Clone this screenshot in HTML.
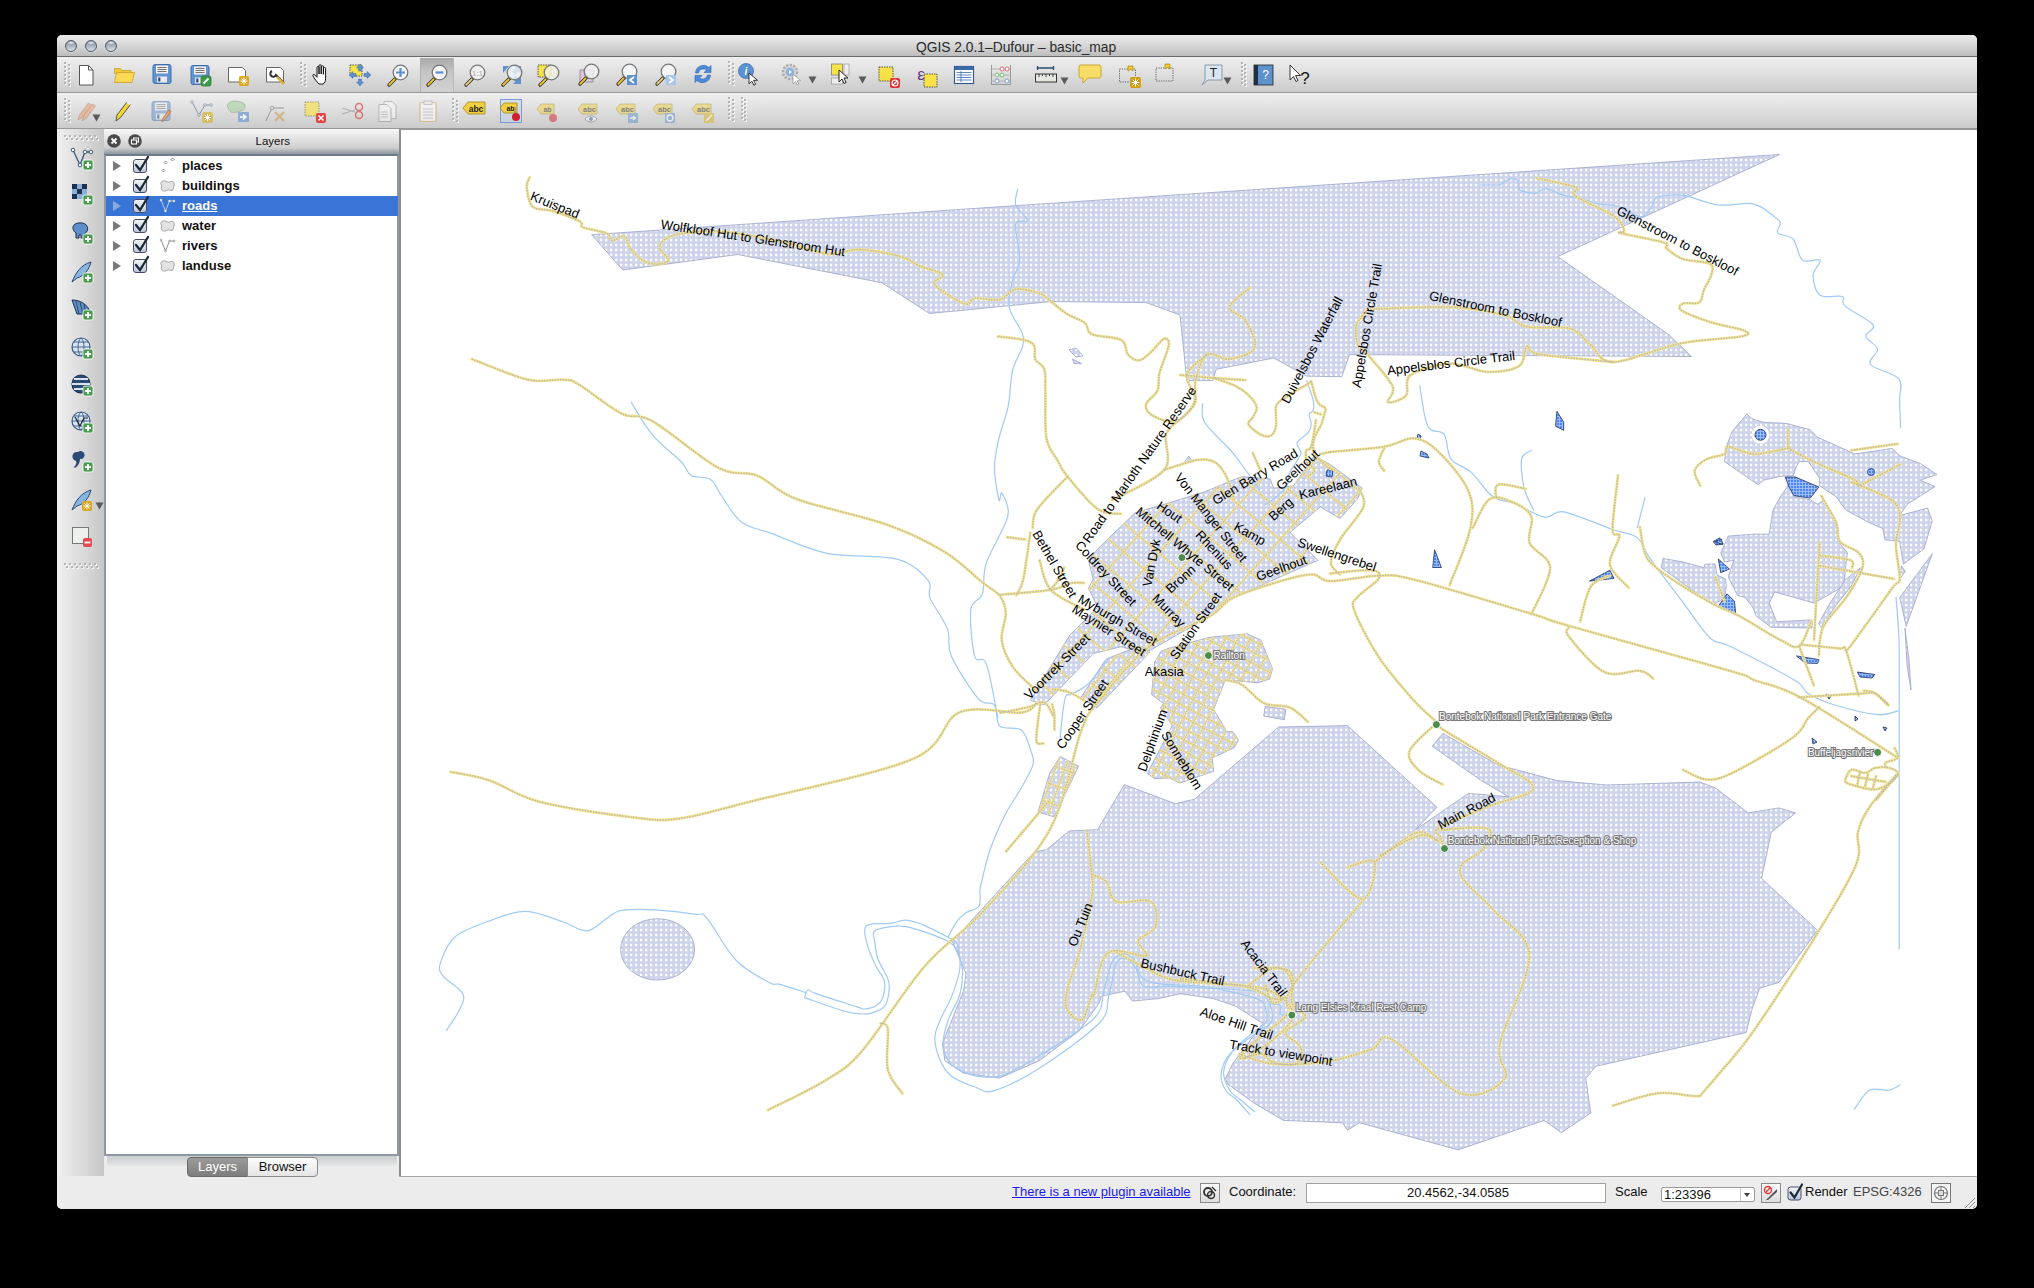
<!DOCTYPE html>
<html><head><meta charset="utf-8">
<style>
*{box-sizing:border-box;margin:0;padding:0}
svg text{font-family:"Liberation Sans",sans-serif}
html,body{width:2034px;height:1288px;overflow:hidden;background:#000;font-family:"Liberation Sans",sans-serif;position:relative}
#win{position:absolute;left:57px;top:35px;width:1920px;height:1174px;background:#ececec;border-radius:5px;overflow:hidden}
#title{position:absolute;left:0;top:0;width:1920px;height:22px;background:linear-gradient(#ececec,#d2d2d2 60%,#bdbdbd);border-bottom:1px solid #6a6a6a}
#title .t{position:absolute;left:859px;top:4.5px;font-size:13.8px;color:#2a2a2a}
.light{position:absolute;top:4.9px;width:12px;height:12px;border-radius:50%;background:radial-gradient(ellipse 40% 18% at 50% 18%,rgba(255,255,255,0.9),rgba(255,255,255,0) 100%),linear-gradient(#8f9dab 10%,#a4b0bc 45%,#d2dae2 90%);border:1.4px solid #4e5964;box-shadow:0 0.5px 0.5px rgba(255,255,255,0.7)}
.tb{position:absolute;left:0;width:1920px;height:36px;background:linear-gradient(#efefef,#dedede 50%,#cbcbcb);border-bottom:1px solid #989898}
#ltb{position:absolute;left:0;top:94px;width:47px;height:1047px;background:linear-gradient(90deg,#f0f0f0,#dadada 55%,#c6c6c6)}
#dock{position:absolute;left:47px;top:94px;width:296px;height:1047px;background:#ececec}
#dtitle{position:absolute;left:0;top:0;width:296px;height:25px;background:linear-gradient(#f8f8f8,#e2e2e2 40%,#cfcfcf 75%,#8c969f)}
#dtitle .t{position:absolute;left:151.5px;top:6px;font-size:11.5px;color:#111}
#tree{position:absolute;left:0;top:25px;width:295px;height:1002px;background:#fff;border:2px solid #8d98a3;border-top:2px solid #6f7b86}
#tabbar{position:absolute;left:1px;top:1027px;width:294px;height:20px;background:#ececec}
#tabbar .strip{position:absolute;left:2px;top:0;width:290px;height:10px;background:linear-gradient(#c8ccd0,#e6e6e6);border-radius:0 0 4px 4px}
#map{position:absolute;left:344px;top:95px;width:1576px;height:1046px;background:#fff;overflow:hidden}
#mapborder{position:absolute;left:342px;top:94px;width:2px;height:1047px;background:#8c8c8c}
#maptop{position:absolute;left:342px;top:94px;width:1578px;height:1px;background:#999}
#status{position:absolute;left:0;top:1141px;width:1920px;height:33px;background:#ececec}
#mapbot{position:absolute;left:342px;top:1141px;width:1578px;height:1px;background:#a8a8a8}
.ic{position:absolute;overflow:visible}
.hd{position:absolute;width:2px;height:2px;background:#b4b4b4;box-shadow:1px 1px 0 #fafafa}
.tri{position:absolute;width:0;height:0;border-left:8px solid #7a7a7a;border-top:5px solid transparent;border-bottom:5px solid transparent}
.lname{position:absolute;left:182px;font-size:13px;font-weight:bold;line-height:17px}
.st{position:absolute;font-size:13px;color:#111;line-height:16px}
.btn{position:absolute;background:linear-gradient(#fafafa,#dcdcdc);border:1px solid #8a8a8a}
</style></head><body>
<svg width="0" height="0" style="position:absolute"><defs><linearGradient id="cbg" x1="0" y1="0" x2="0" y2="1"><stop offset="0" stop-color="#f6f8fa"/><stop offset="1" stop-color="#b8c6d6"/></linearGradient></defs></svg>
<div id="win">
  <div id="title">
    <div class="light" style="left:7.9px"></div>
    <div class="light" style="left:27.8px"></div>
    <div class="light" style="left:47.9px"></div>
    <div class="t">QGIS 2.0.1–Dufour – basic_map</div>
  </div>
  <div class="tb" id="tb1" style="top:22px"></div>
  <div class="tb" id="tb2" style="top:58px"></div>
  <div id="ltb"></div>
  <div id="dock">
    <div id="dtitle"><div class="t">Layers</div></div>
    <div id="tree"></div>
    <div id="tabbar"><div class="strip"></div></div>
  </div>
  <div id="mapborder"></div>
  <div id="maptop"></div>
  <div id="map"><svg width="1576" height="1046" viewBox="401 130 1576 1046" style="position:absolute;left:0;top:0">
<defs><pattern id="dots" x="0" y="3" width="5" height="5" patternUnits="userSpaceOnUse"><rect width="5" height="5" fill="#ccd3ea"/><rect x="-0.5" y="0.5" width="3" height="3" fill="#e3e6f2"/><rect x="0" y="1" width="2" height="2" fill="#ffffff"/></pattern>
<pattern id="wdots" x="0" y="0" width="3" height="3" patternUnits="userSpaceOnUse"><rect width="3" height="3" fill="#9bbcf8"/><rect x="0" y="0" width="2" height="2" fill="#4d86f0"/></pattern></defs>
<polygon points="591.7,234.7 1000.0,206.7 1779.5,154.5 1557.7,256.6 1668.6,334.5 1691.5,356.5 1349.6,354.6 1341.7,376.8 1306.6,376.1 1273.8,358.0 1216.2,369.3 1212.8,380.6 1186.8,380.6 1180.0,315.0 1146.0,302.6 1051.0,301.5 990.0,307.6 929.5,313.5 882.0,282.8 737.8,254.5 622.7,270.0" fill="url(#dots)" stroke="#9aa3c8" stroke-width="0.8"/>
<polygon points="1124.3,784.6 1175.2,803.7 1194.4,799.3 1278.6,727.0 1347.4,725.6 1437.0,807.2 1415.4,829.8 1468.5,793.4 1508.8,796.8 1481.3,780.6 1432.1,746.2 1442.9,733.4 1498.0,764.9 1557.0,780.6 1606.2,785.0 1700.0,782.0 1715.4,787.9 1748.2,812.9 1779.0,807.9 1795.5,812.9 1771.3,832.2 1761.6,878.4 1817.5,930.4 1779.0,982.4 1759.7,988.2 1752.0,1009.3 1746.2,1032.5 1595.7,1066.3 1585.8,1078.6 1590.8,1113.0 1561.3,1132.6 1544.0,1120.4 1458.0,1149.9 1359.7,1122.8 1347.4,1130.2 1342.5,1122.8 1283.5,1120.4 1254.0,1103.1 1227.0,1083.5 1225.6,1078.1 1233.0,1063.2 1262.9,1023.5 1235.5,1006.0 1213.2,998.6 1180.9,993.7 1158.5,998.6 1132.4,1001.1 1125.0,991.2 1101.4,996.1 1098.9,1003.6 1079.0,1031.0 1039.3,1060.7 999.5,1078.1 963.5,1073.2 944.8,1060.7 942.4,1043.4 963.5,991.2 966.0,973.8 952.3,941.5 1034.3,852.0 1046.7,849.6 1069.0,831.0 1097.6,829.7" fill="url(#dots)" stroke="#9aa3c8" stroke-width="0.8"/>
<polygon points="1030.3,700.2 1044.3,704.9 1093.2,653.6 1121.1,646.7 1144.4,653.6 1209.7,616.4 1233.0,597.7 1312.2,562.8 1318.0,560.5 1290.0,532.5 1320.3,506.9 1340.1,518.5 1357.6,498.7 1362.3,488.2 1330.8,464.9 1314.5,455.6 1293.5,485.9 1273.7,488.2 1270.2,478.9 1242.3,476.6 1233.0,480.1 1205.0,491.7 1174.7,501.1 1135.1,512.7 1097.8,548.8 1088.5,560.5 1093.2,579.1 1088.5,588.4 1097.8,607.1 1069.9,635.0" fill="url(#dots)" stroke="#9aa3c8" stroke-width="0.8"/>
<polygon points="1097.0,707.9 1080.8,697.5 1105.9,659.2 1120.6,653.3 1140.0,646.0 1150.0,652.0" fill="url(#dots)" stroke="#9aa3c8" stroke-width="0.8"/>
<polygon points="1161.2,651.1 1169.3,648.1 1209.7,637.3 1247.0,633.8 1260.8,640.0 1272.6,668.8 1269.6,679.1 1257.8,682.8 1225.4,679.8 1213.6,709.3 1226.8,731.5 1232.7,731.5 1238.6,740.3 1234.2,747.7 1212.1,758.0 1213.6,771.3 1179.6,783.1 1169.3,777.9 1154.6,778.7 1147.2,773.5 1172.3,725.6 1160.5,707.9 1163.4,703.4 1151.6,694.6 1154.6,662.1" fill="url(#dots)" stroke="#9aa3c8" stroke-width="0.8"/>
<polygon points="1060.2,756.5 1078.6,766.1 1054.3,817.0 1038.0,811.9 1049.8,772.8" fill="url(#dots)" stroke="#9aa3c8" stroke-width="0.8"/>
<polygon points="1265.2,706.4 1285.8,709.3 1284.4,719.7 1263.7,716.0" fill="url(#dots)" stroke="#9aa3c8" stroke-width="0.8"/>
<polygon points="1746.9,414.0 1751.5,418.6 1763.7,422.4 1786.0,423.3 1810.2,429.8 1817.7,437.3 1855.0,454.0 1892.2,448.4 1899.7,455.9 1920.2,463.4 1937.0,474.5 1920.2,480.1 1935.1,486.6 1907.1,504.3 1899.7,515.5 1927.6,508.1 1932.3,521.1 1923.9,549.0 1903.4,564.0 1899.7,541.6 1884.8,539.7 1882.9,528.6 1869.9,523.0 1845.6,509.9 1836.3,496.9 1819.6,485.7 1819.6,478.3 1808.4,461.5 1799.0,461.5 1795.3,468.9 1793.5,475.5 1780.4,476.4 1763.7,480.1 1758.1,484.8 1724.5,461.5 1726.4,446.6 1732.0,431.7" fill="url(#dots)" stroke="#9aa3c8" stroke-width="0.8"/>
<polygon points="1780.4,496.9 1791.6,480.1 1793.5,496.9 1810.2,499.7 1817.7,504.3 1823.3,500.6 1832.6,513.7 1836.3,526.7 1838.2,541.6 1847.5,552.8 1846.6,558.4 1843.8,586.3 1814.0,603.1 1774.8,591.9 1769.2,603.1 1776.7,621.7 1812.1,619.9 1812.0,628.0 1771.1,627.3 1756.2,616.1 1752.5,606.8 1745.0,597.5 1737.6,595.6 1728.3,577.0 1733.8,560.2 1724.5,562.1 1720.8,552.8 1728.3,536.0 1754.3,534.2 1769.2,534.2 1773.0,510.0" fill="url(#dots)" stroke="#9aa3c8" stroke-width="0.8"/>
<polygon points="1663.0,558.4 1683.5,562.1 1704.0,567.7 1705.0,564.0 1715.2,564.0 1717.1,575.1 1725.5,578.9 1726.4,586.3 1724.5,597.5 1713.4,605.0 1702.2,597.5 1661.2,567.7" fill="url(#dots)" stroke="#9aa3c8" stroke-width="0.8"/>
<polygon points="1932.3,553.7 1899.7,597.5 1906.2,626.4" fill="url(#dots)" stroke="#9aa3c8" stroke-width="0.8"/>
<polygon points="1905.0,628.0 1909.0,660.0 1911.0,690.0 1907.0,665.0" fill="url(#dots)" stroke="#9aa3c8" stroke-width="0.8"/>
<polygon points="1901.5,565.8 1905.3,571.4 1899.7,578.9" fill="url(#dots)" stroke="#9aa3c8" stroke-width="0.8"/>
<polygon points="1860.5,567.7 1851.2,586.3 1836.3,605.0 1821.4,627.3 1818.6,623.6 1828.9,605.0 1845.0,580.0" fill="url(#dots)" stroke="#9aa3c8" stroke-width="0.8"/>
<polygon points="1069.0,350.0 1076.0,348.0 1083.0,356.0 1076.0,357.0" fill="url(#dots)" stroke="#9aa3c8" stroke-width="0.8"/>
<polygon points="1072.5,359.0 1081.6,363.7 1074.0,363.7" fill="url(#dots)" stroke="#9aa3c8" stroke-width="0.8"/>
<polygon points="1188.7,456.0 1193.0,462.0 1184.0,463.0" fill="url(#dots)" stroke="#9aa3c8" stroke-width="0.8"/>
<ellipse cx="657.6" cy="949.4" rx="37" ry="30.7" fill="url(#dots)" stroke="#9aa3c8" stroke-width="0.8"/>
<polygon points="1785.3,477.0 1795.3,477.0 1818.9,487.0 1810.2,498.1 1794.0,495.7 1789.0,487.0" fill="url(#wdots)" stroke="#1e2e60" stroke-width="0.8"/>
<polygon points="1713.3,541.6 1719.5,537.9 1723.2,544.1 1716.0,545.0" fill="url(#wdots)" stroke="#1e2e60" stroke-width="0.8"/>
<polygon points="1718.3,559.0 1729.4,569.0 1720.7,572.7" fill="url(#wdots)" stroke="#1e2e60" stroke-width="0.8"/>
<polygon points="1727.0,593.8 1734.4,601.2 1735.7,613.7 1718.3,606.2" fill="url(#wdots)" stroke="#1e2e60" stroke-width="0.8"/>
<polygon points="1796.5,655.9 1818.9,659.6 1817.6,663.4 1805.0,663.0" fill="url(#wdots)" stroke="#1e2e60" stroke-width="0.8"/>
<polygon points="1857.4,672.0 1874.8,674.5 1872.0,678.0 1860.0,677.0" fill="url(#wdots)" stroke="#1e2e60" stroke-width="0.8"/>
<polygon points="1556.9,411.3 1563.7,422.1 1563.7,430.3 1555.5,426.2" fill="url(#wdots)" stroke="#1e2e60" stroke-width="0.8"/>
<polygon points="1434.6,549.8 1441.4,567.5 1432.7,567.5" fill="url(#wdots)" stroke="#1e2e60" stroke-width="0.8"/>
<polygon points="1589.5,581.1 1609.9,570.2 1614.0,578.4" fill="url(#wdots)" stroke="#1e2e60" stroke-width="0.8"/>
<polygon points="1714.5,541.7 1721.3,539.0 1722.7,544.4" fill="url(#wdots)" stroke="#1e2e60" stroke-width="0.8"/>
<polygon points="1418.0,434.0 1421.0,436.0 1420.0,440.0 1417.0,439.0" fill="url(#wdots)" stroke="#1e2e60" stroke-width="0.8"/>
<polygon points="1421.0,451.0 1427.0,454.0 1429.0,458.0 1420.0,456.0" fill="url(#wdots)" stroke="#1e2e60" stroke-width="0.8"/>
<polygon points="1826.0,694.0 1831.0,696.0 1829.0,699.0" fill="url(#wdots)" stroke="#1e2e60" stroke-width="0.8"/>
<polygon points="1855.0,716.0 1858.0,719.0 1855.0,721.0" fill="url(#wdots)" stroke="#1e2e60" stroke-width="0.8"/>
<polygon points="1883.0,727.0 1887.0,728.0 1885.0,731.0" fill="url(#wdots)" stroke="#1e2e60" stroke-width="0.8"/>
<polygon points="1812.0,738.0 1817.0,742.0 1813.0,744.0" fill="url(#wdots)" stroke="#1e2e60" stroke-width="0.8"/>
<polygon points="1327.0,470.0 1333.0,470.0 1332.0,477.0 1326.0,476.0" fill="url(#wdots)" stroke="#1e2e60" stroke-width="0.8"/>
<circle cx="1760.5" cy="434.8" r="9" fill="#fff"/><circle cx="1760.5" cy="434.8" r="5.5" fill="url(#wdots)" stroke="#1e2e60" stroke-width="0.8"/>
<circle cx="1871" cy="472" r="3.5" fill="url(#wdots)" stroke="#1e2e60" stroke-width="0.7"/>
<clipPath id="cp1"><polygon points="1030.3,700.2 1044.3,704.9 1093.2,653.6 1121.1,646.7 1144.4,653.6 1209.7,616.4 1233.0,597.7 1312.2,562.8 1318.0,560.5 1290.0,532.5 1320.3,506.9 1340.1,518.5 1357.6,498.7 1362.3,488.2 1330.8,464.9 1314.5,455.6 1293.5,485.9 1273.7,488.2 1270.2,478.9 1242.3,476.6 1233.0,480.1 1205.0,491.7 1174.7,501.1 1135.1,512.7 1097.8,548.8 1088.5,560.5 1093.2,579.1 1088.5,588.4 1097.8,607.1 1069.9,635.0"/></clipPath>
<g clip-path="url(#cp1)"><path d="M1166.3 99.5L1675.0 526.3 M1152.2 116.3L1660.8 543.2 M1138.0 133.2L1646.7 560.0 M1123.9 150.1L1632.5 576.9 M1109.7 166.9L1618.4 593.7 M1095.6 183.8L1604.3 610.6 M1081.5 200.6L1590.1 627.4 M1067.3 217.5L1576.0 644.3 M1053.2 234.3L1561.8 661.1 M1039.0 251.2L1547.7 678.0 M1024.9 268.0L1533.5 694.8 M1010.8 284.9L1519.4 711.7 M996.6 301.7L1505.3 728.5 M982.5 318.6L1491.1 745.4 M968.3 335.4L1477.0 762.2 M954.2 352.3L1462.8 779.1 M940.0 369.1L1448.7 796.0 M925.9 386.0L1434.6 812.8 M911.8 402.8L1420.4 829.7 M897.6 419.7L1406.3 846.5 M883.5 436.6L1392.1 863.4 M869.3 453.4L1378.0 880.2 M855.2 470.3L1363.9 897.1 M841.1 487.1L1349.7 913.9 M826.9 504.0L1335.6 930.8 M812.8 520.8L1321.4 947.6 M798.6 537.7L1307.3 964.5 M784.5 554.5L1293.1 981.3 M770.3 571.4L1279.0 998.2 M756.2 588.2L1264.9 1015.0 M742.1 605.1L1250.7 1031.9 M727.9 621.9L1236.6 1048.7 M719.2 597.5L1163.6 104.0 M739.3 615.5L1183.6 122.1 M759.4 633.6L1203.7 140.1 M779.4 651.7L1223.7 158.2 M799.5 669.7L1243.8 176.3 M819.6 687.8L1263.9 194.3 M839.6 705.9L1283.9 212.4 M859.7 723.9L1304.0 230.5 M879.8 742.0L1324.1 248.5 M899.8 760.1L1344.1 266.6 M919.9 778.1L1364.2 284.7 M940.0 796.2L1384.3 302.7 M960.0 814.3L1404.3 320.8 M980.1 832.3L1424.4 338.9 M1000.2 850.4L1444.5 356.9 M1020.2 868.5L1464.5 375.0 M1040.3 886.5L1484.6 393.1 M1060.4 904.6L1504.7 411.1 M1080.4 922.7L1524.7 429.2 M1100.5 940.7L1544.8 447.3 M1120.5 958.8L1564.9 465.3 M1140.6 976.9L1584.9 483.4 M1160.7 994.9L1605.0 501.5 M1180.7 1013.0L1625.0 519.5 M1200.8 1031.1L1645.1 537.6 M1220.9 1049.1L1665.2 555.7" fill="none" stroke="#f4e290" stroke-width="2.4"/><path d="M1166.3 99.5L1675.0 526.3 M1152.2 116.3L1660.8 543.2 M1138.0 133.2L1646.7 560.0 M1123.9 150.1L1632.5 576.9 M1109.7 166.9L1618.4 593.7 M1095.6 183.8L1604.3 610.6 M1081.5 200.6L1590.1 627.4 M1067.3 217.5L1576.0 644.3 M1053.2 234.3L1561.8 661.1 M1039.0 251.2L1547.7 678.0 M1024.9 268.0L1533.5 694.8 M1010.8 284.9L1519.4 711.7 M996.6 301.7L1505.3 728.5 M982.5 318.6L1491.1 745.4 M968.3 335.4L1477.0 762.2 M954.2 352.3L1462.8 779.1 M940.0 369.1L1448.7 796.0 M925.9 386.0L1434.6 812.8 M911.8 402.8L1420.4 829.7 M897.6 419.7L1406.3 846.5 M883.5 436.6L1392.1 863.4 M869.3 453.4L1378.0 880.2 M855.2 470.3L1363.9 897.1 M841.1 487.1L1349.7 913.9 M826.9 504.0L1335.6 930.8 M812.8 520.8L1321.4 947.6 M798.6 537.7L1307.3 964.5 M784.5 554.5L1293.1 981.3 M770.3 571.4L1279.0 998.2 M756.2 588.2L1264.9 1015.0 M742.1 605.1L1250.7 1031.9 M727.9 621.9L1236.6 1048.7 M719.2 597.5L1163.6 104.0 M739.3 615.5L1183.6 122.1 M759.4 633.6L1203.7 140.1 M779.4 651.7L1223.7 158.2 M799.5 669.7L1243.8 176.3 M819.6 687.8L1263.9 194.3 M839.6 705.9L1283.9 212.4 M859.7 723.9L1304.0 230.5 M879.8 742.0L1324.1 248.5 M899.8 760.1L1344.1 266.6 M919.9 778.1L1364.2 284.7 M940.0 796.2L1384.3 302.7 M960.0 814.3L1404.3 320.8 M980.1 832.3L1424.4 338.9 M1000.2 850.4L1444.5 356.9 M1020.2 868.5L1464.5 375.0 M1040.3 886.5L1484.6 393.1 M1060.4 904.6L1504.7 411.1 M1080.4 922.7L1524.7 429.2 M1100.5 940.7L1544.8 447.3 M1120.5 958.8L1564.9 465.3 M1140.6 976.9L1584.9 483.4 M1160.7 994.9L1605.0 501.5 M1180.7 1013.0L1625.0 519.5 M1200.8 1031.1L1645.1 537.6 M1220.9 1049.1L1665.2 555.7" fill="none" stroke="#c4c0b0" stroke-width="1.2" stroke-dasharray="1.4 1.2"/></g>
<clipPath id="cp2"><polygon points="1097.0,707.9 1080.8,697.5 1105.9,659.2 1120.6,653.3 1140.0,646.0 1150.0,652.0"/></clipPath>
<g clip-path="url(#cp2)"><path d="M1016.1 687.2L1101.3 578.1 M1025.5 694.5L1110.7 585.5 M1035.0 701.9L1120.2 592.9 M1044.4 709.3L1129.6 600.3 M1053.9 716.7L1139.1 607.6 M1063.3 724.1L1148.5 615.0 M1072.8 731.5L1158.0 622.4 M1082.3 738.9L1167.5 629.8 M1091.7 746.3L1176.9 637.2 M1101.2 753.6L1186.4 644.6 M1110.6 761.0L1195.8 652.0 M1120.1 768.4L1205.3 659.4 M1110.1 571.3L1219.2 656.5 M1097.8 587.1L1206.9 672.3 M1085.5 602.8L1194.6 688.0 M1073.2 618.6L1182.2 703.8 M1060.9 634.3L1169.9 719.6 M1048.6 650.1L1157.6 735.3 M1036.2 665.9L1145.3 751.1 M1023.9 681.6L1133.0 766.8" fill="none" stroke="#f4e290" stroke-width="2.4"/><path d="M1016.1 687.2L1101.3 578.1 M1025.5 694.5L1110.7 585.5 M1035.0 701.9L1120.2 592.9 M1044.4 709.3L1129.6 600.3 M1053.9 716.7L1139.1 607.6 M1063.3 724.1L1148.5 615.0 M1072.8 731.5L1158.0 622.4 M1082.3 738.9L1167.5 629.8 M1091.7 746.3L1176.9 637.2 M1101.2 753.6L1186.4 644.6 M1110.6 761.0L1195.8 652.0 M1120.1 768.4L1205.3 659.4 M1110.1 571.3L1219.2 656.5 M1097.8 587.1L1206.9 672.3 M1085.5 602.8L1194.6 688.0 M1073.2 618.6L1182.2 703.8 M1060.9 634.3L1169.9 719.6 M1048.6 650.1L1157.6 735.3 M1036.2 665.9L1145.3 751.1 M1023.9 681.6L1133.0 766.8" fill="none" stroke="#c4c0b0" stroke-width="1.2" stroke-dasharray="1.4 1.2"/></g>
<clipPath id="cp3"><polygon points="1161.2,651.1 1169.3,648.1 1209.7,637.3 1247.0,633.8 1260.8,640.0 1272.6,668.8 1269.6,679.1 1257.8,682.8 1225.4,679.8 1213.6,709.3 1226.8,731.5 1232.7,731.5 1238.6,740.3 1234.2,747.7 1212.1,758.0 1213.6,771.3 1179.6,783.1 1169.3,777.9 1154.6,778.7 1147.2,773.5 1172.3,725.6 1160.5,707.9 1163.4,703.4 1151.6,694.6 1154.6,662.1"/></clipPath>
<g clip-path="url(#cp3)"><path d="M1148.5 505.9L1412.1 646.1 M1143.8 514.7L1407.5 654.9 M1139.1 523.6L1402.8 663.8 M1134.4 532.4L1398.1 672.6 M1129.7 541.2L1393.4 681.4 M1125.0 550.1L1388.7 690.2 M1120.3 558.9L1384.0 699.1 M1115.6 567.7L1379.3 707.9 M1110.9 576.6L1374.6 716.7 M1106.2 585.4L1369.9 725.6 M1101.5 594.2L1365.2 734.4 M1096.9 603.0L1360.5 743.2 M1092.2 611.9L1355.8 752.1 M1087.5 620.7L1351.1 760.9 M1082.8 629.5L1346.4 769.7 M1078.1 638.4L1341.7 778.5 M1073.4 647.2L1337.0 787.4 M1068.7 656.0L1332.3 796.2 M1064.0 664.8L1327.6 805.0 M1059.3 673.7L1322.9 813.9 M1054.6 682.5L1318.3 822.7 M1049.9 691.3L1313.6 831.5 M1045.2 700.2L1308.9 840.3 M1040.5 709.0L1304.2 849.2 M1035.8 717.8L1299.5 858.0 M1031.1 726.7L1294.8 866.8 M1026.4 735.5L1290.1 875.7 M1021.7 744.3L1285.4 884.5 M1017.0 753.1L1280.7 893.3 M1012.3 762.0L1276.0 902.2 M1006.5 769.4L1146.7 505.7 M1016.2 774.5L1156.4 510.9 M1025.9 779.7L1166.1 516.1 M1035.6 784.9L1175.8 521.2 M1045.3 790.0L1185.5 526.4 M1055.0 795.2L1195.2 531.6 M1064.8 800.4L1204.9 536.7 M1074.5 805.5L1214.7 541.9 M1084.2 810.7L1224.4 547.0 M1093.9 815.9L1234.1 552.2 M1103.6 821.0L1243.8 557.4 M1113.3 826.2L1253.5 562.5 M1123.0 831.4L1263.2 567.7 M1132.7 836.5L1272.9 572.9 M1142.5 841.7L1282.6 578.0 M1152.2 846.8L1292.4 583.2 M1161.9 852.0L1302.1 588.4 M1171.6 857.2L1311.8 593.5 M1181.3 862.3L1321.5 598.7 M1191.0 867.5L1331.2 603.9 M1200.7 872.7L1340.9 609.0 M1210.4 877.8L1350.6 614.2 M1220.2 883.0L1360.3 619.3 M1229.9 888.2L1370.1 624.5 M1239.6 893.3L1379.8 629.7 M1249.3 898.5L1389.5 634.8 M1259.0 903.7L1399.2 640.0 M1268.7 908.8L1408.9 645.2" fill="none" stroke="#f4e290" stroke-width="2.4"/><path d="M1148.5 505.9L1412.1 646.1 M1143.8 514.7L1407.5 654.9 M1139.1 523.6L1402.8 663.8 M1134.4 532.4L1398.1 672.6 M1129.7 541.2L1393.4 681.4 M1125.0 550.1L1388.7 690.2 M1120.3 558.9L1384.0 699.1 M1115.6 567.7L1379.3 707.9 M1110.9 576.6L1374.6 716.7 M1106.2 585.4L1369.9 725.6 M1101.5 594.2L1365.2 734.4 M1096.9 603.0L1360.5 743.2 M1092.2 611.9L1355.8 752.1 M1087.5 620.7L1351.1 760.9 M1082.8 629.5L1346.4 769.7 M1078.1 638.4L1341.7 778.5 M1073.4 647.2L1337.0 787.4 M1068.7 656.0L1332.3 796.2 M1064.0 664.8L1327.6 805.0 M1059.3 673.7L1322.9 813.9 M1054.6 682.5L1318.3 822.7 M1049.9 691.3L1313.6 831.5 M1045.2 700.2L1308.9 840.3 M1040.5 709.0L1304.2 849.2 M1035.8 717.8L1299.5 858.0 M1031.1 726.7L1294.8 866.8 M1026.4 735.5L1290.1 875.7 M1021.7 744.3L1285.4 884.5 M1017.0 753.1L1280.7 893.3 M1012.3 762.0L1276.0 902.2 M1006.5 769.4L1146.7 505.7 M1016.2 774.5L1156.4 510.9 M1025.9 779.7L1166.1 516.1 M1035.6 784.9L1175.8 521.2 M1045.3 790.0L1185.5 526.4 M1055.0 795.2L1195.2 531.6 M1064.8 800.4L1204.9 536.7 M1074.5 805.5L1214.7 541.9 M1084.2 810.7L1224.4 547.0 M1093.9 815.9L1234.1 552.2 M1103.6 821.0L1243.8 557.4 M1113.3 826.2L1253.5 562.5 M1123.0 831.4L1263.2 567.7 M1132.7 836.5L1272.9 572.9 M1142.5 841.7L1282.6 578.0 M1152.2 846.8L1292.4 583.2 M1161.9 852.0L1302.1 588.4 M1171.6 857.2L1311.8 593.5 M1181.3 862.3L1321.5 598.7 M1191.0 867.5L1331.2 603.9 M1200.7 872.7L1340.9 609.0 M1210.4 877.8L1350.6 614.2 M1220.2 883.0L1360.3 619.3 M1229.9 888.2L1370.1 624.5 M1239.6 893.3L1379.8 629.7 M1249.3 898.5L1389.5 634.8 M1259.0 903.7L1399.2 640.0 M1268.7 908.8L1408.9 645.2" fill="none" stroke="#c4c0b0" stroke-width="1.2" stroke-dasharray="1.4 1.2"/></g>
<clipPath id="cp4"><polygon points="1060.2,756.5 1078.6,766.1 1054.3,817.0 1038.0,811.9 1049.8,772.8"/></clipPath>
<g clip-path="url(#cp4)"><path d="M978.4 822.1L1019.8 708.4 M986.9 825.1L1028.2 711.4 M995.3 828.2L1036.7 714.5 M1003.8 831.3L1045.2 717.6 M1012.2 834.4L1053.6 720.7 M1020.7 837.4L1062.1 723.7 M1029.2 840.5L1070.5 726.8 M1037.6 843.6L1079.0 729.9 M1046.1 846.7L1087.4 733.0 M1054.5 849.8L1095.9 736.1 M1063.0 852.8L1104.4 739.1 M1071.4 855.9L1112.8 742.2 M1079.9 859.0L1121.3 745.3 M1088.4 862.1L1129.7 748.4 M1026.1 698.4L1139.8 739.8 M1019.9 715.3L1133.6 756.7 M1013.8 732.2L1127.5 773.6 M1007.6 749.1L1121.3 790.5 M1001.4 766.1L1115.2 807.4 M995.3 783.0L1109.0 824.4 M989.1 799.9L1102.8 841.3 M983.0 816.8L1096.7 858.2" fill="none" stroke="#f4e290" stroke-width="2.4"/><path d="M978.4 822.1L1019.8 708.4 M986.9 825.1L1028.2 711.4 M995.3 828.2L1036.7 714.5 M1003.8 831.3L1045.2 717.6 M1012.2 834.4L1053.6 720.7 M1020.7 837.4L1062.1 723.7 M1029.2 840.5L1070.5 726.8 M1037.6 843.6L1079.0 729.9 M1046.1 846.7L1087.4 733.0 M1054.5 849.8L1095.9 736.1 M1063.0 852.8L1104.4 739.1 M1071.4 855.9L1112.8 742.2 M1079.9 859.0L1121.3 745.3 M1088.4 862.1L1129.7 748.4 M1026.1 698.4L1139.8 739.8 M1019.9 715.3L1133.6 756.7 M1013.8 732.2L1127.5 773.6 M1007.6 749.1L1121.3 790.5 M1001.4 766.1L1115.2 807.4 M995.3 783.0L1109.0 824.4 M989.1 799.9L1102.8 841.3 M983.0 816.8L1096.7 858.2" fill="none" stroke="#c4c0b0" stroke-width="1.2" stroke-dasharray="1.4 1.2"/></g>
<path d="M1269.8 1004.0 C1271.6 1004.2 1278.7 1003.5 1280.5 1005.3 C1282.3 1007.0 1278.9 1012.9 1280.5 1014.5 C1282.1 1016.1 1288.4 1014.9 1290.0 1015.0" fill="none" stroke="#9fcaf5" stroke-width="1.2" stroke-linejoin="round"/>
<path d="M1107.8 659.4 C1104.7 663.3 1095.2 677.2 1089.2 683.0 C1083.2 688.8 1075.7 691.9 1071.8 694.2 C1067.9 696.5 1067.2 692.3 1065.6 696.6 C1063.9 700.9 1062.8 712.8 1061.9 720.0 C1061.0 727.2 1060.3 736.7 1060.0 740.0" fill="none" stroke="#9fcaf5" stroke-width="1.2" stroke-linejoin="round"/>
<path d="M631.0 401.8 C634.6 407.3 644.0 424.8 652.4 434.8 C660.8 444.8 675.0 455.2 681.5 462.0 C688.0 468.8 686.4 472.7 691.2 475.6 C696.1 478.5 705.4 475.9 710.6 479.5 C715.8 483.1 717.1 489.9 722.3 497.0 C727.5 504.1 733.3 516.1 741.7 522.2 C750.1 528.4 758.6 528.7 772.8 533.9 C787.0 539.1 806.4 549.1 827.1 553.3 C847.8 557.5 880.2 554.6 897.0 559.1 C913.8 563.6 922.6 573.9 928.1 580.4 C933.6 586.9 926.8 589.8 930.0 597.9 C933.2 606.0 943.9 619.3 947.5 629.0 C951.1 638.7 946.2 644.6 951.4 656.2 C956.6 667.9 971.4 690.8 978.5 698.9 C985.6 707.0 990.5 700.2 994.1 704.7 C997.7 709.2 995.4 721.9 999.9 726.1 C1004.4 730.3 1016.1 725.8 1021.3 730.0 C1026.5 734.2 1029.1 745.5 1031.0 751.3 C1032.9 757.1 1034.7 758.4 1032.9 764.9 C1031.1 771.4 1024.7 781.6 1020.0 790.0 C1015.4 798.4 1010.0 805.0 1005.0 815.0 C1000.0 825.0 993.8 839.2 990.0 850.0 C986.2 860.8 983.7 873.3 982.0 880.0 C980.3 886.7 980.2 888.3 979.8 890.0" fill="none" stroke="#9fcaf5" stroke-width="1.2" stroke-linejoin="round"/>
<path d="M1017.7 189.0 C1017.4 191.6 1014.1 199.4 1015.7 204.7 C1017.3 209.9 1027.5 217.2 1027.5 220.5 C1027.5 223.8 1017.0 217.8 1015.7 224.4 C1014.4 231.0 1020.2 250.5 1019.7 259.8 C1019.2 269.1 1014.4 272.1 1012.6 280.0 C1010.9 287.9 1007.7 298.4 1009.2 307.1 C1010.7 315.8 1019.4 325.6 1021.7 332.0 C1024.0 338.4 1024.3 339.2 1022.8 345.6 C1021.3 352.0 1015.0 360.3 1012.6 370.5 C1010.2 380.7 1010.4 395.3 1008.1 406.6 C1005.8 417.9 1001.3 428.1 999.0 438.3 C996.7 448.5 994.5 457.4 994.5 467.7 C994.5 478.0 997.8 495.8 999.0 500.0 C1000.2 504.2 1000.3 490.4 1001.8 493.1 C1003.2 495.8 1010.3 504.8 1007.7 516.4 C1005.1 528.0 990.5 550.1 986.3 563.0 C982.1 575.9 985.0 586.2 982.4 594.0 C979.8 601.8 972.1 599.2 970.8 609.6 C969.5 620.0 972.1 647.2 974.7 656.2 C977.3 665.2 982.4 653.5 986.3 663.9 C990.2 674.2 996.0 709.2 998.0 718.3" fill="none" stroke="#9fcaf5" stroke-width="1.2" stroke-linejoin="round"/>
<path d="M446.2 1030.7 C448.4 1027.3 456.3 1016.5 459.1 1010.4 C461.9 1004.2 465.6 999.6 462.8 993.8 C460.0 987.9 446.2 980.5 442.5 975.3 C438.8 970.1 438.5 968.9 440.6 962.4 C442.8 955.9 446.8 943.6 455.4 936.5 C464.0 929.4 480.7 924.1 492.4 919.9 C504.1 915.7 513.9 911.1 525.6 911.4 C537.3 911.7 553.4 918.6 562.6 921.7 C571.9 924.8 576.2 928.7 581.1 929.9 C586.0 931.1 587.0 931.7 592.2 929.1 C597.4 926.5 607.0 917.5 612.5 914.3 C618.0 911.1 618.3 910.6 625.4 909.9 C632.5 909.2 643.3 909.2 655.0 909.9 C666.7 910.6 687.0 912.9 695.6 914.3 C704.2 915.6 699.9 910.3 706.7 918.0 C713.5 925.7 725.8 949.7 736.3 960.5 C746.8 971.3 762.2 978.7 769.5 982.7 C776.8 986.7 773.9 982.6 780.0 984.3 C786.1 986.0 801.8 991.3 806.1 992.7" fill="none" stroke="#9fcaf5" stroke-width="1.2" stroke-linejoin="round"/>
<path d="M806.1 992.7 C806.5 992.2 806.9 989.4 808.5 989.5 C810.1 989.6 807.9 990.8 815.9 993.6 C823.9 996.5 848.5 1004.0 856.6 1006.6 C864.8 1009.2 861.5 1009.1 864.8 1009.0 C868.1 1008.9 873.2 1007.7 876.2 1005.8 C879.2 1003.9 881.3 1001.7 882.7 997.6 C884.1 993.5 885.5 986.5 884.4 981.3 C883.3 976.1 878.9 972.3 876.2 966.6 C873.5 960.9 869.9 953.4 868.0 947.1 C866.1 940.9 864.2 932.9 864.8 929.1 C865.3 925.3 866.9 925.2 871.3 924.2 C875.6 923.2 885.2 924.1 890.9 923.4 C896.6 922.7 900.2 919.9 905.6 920.2 C911.0 920.5 916.4 922.2 923.5 925.1 C930.6 928.0 942.6 934.4 948.0 937.3 C953.4 940.1 954.2 939.2 956.1 942.2 C958.0 945.2 958.9 950.3 959.4 955.2 C959.9 960.1 960.8 964.4 959.4 971.5 C958.0 978.6 954.2 990.0 951.2 997.6 C948.2 1005.2 944.1 1010.7 941.4 1017.2 C938.7 1023.7 935.2 1029.7 934.9 1036.8 C934.6 1043.9 937.1 1053.1 939.8 1059.6 C942.5 1066.1 945.2 1071.3 951.2 1075.9 C957.2 1080.5 968.5 1084.8 975.7 1087.3 C982.9 1089.8 983.9 1093.8 994.5 1090.6 C1005.1 1087.4 1021.9 1079.4 1039.3 1068.2 C1056.7 1057.0 1087.3 1035.5 1098.9 1023.5 C1110.5 1011.5 1105.9 1006.1 1108.8 996.1 C1111.7 986.1 1113.4 970.0 1116.3 963.8 C1119.2 957.6 1122.9 958.1 1126.2 958.9 C1129.5 959.7 1133.2 964.2 1136.1 968.8 C1139.0 973.3 1138.2 983.3 1143.6 986.2 C1149.0 989.1 1158.1 985.9 1168.4 986.2 C1178.8 986.5 1193.8 987.4 1205.7 988.0 C1217.6 988.6 1231.1 989.3 1240.0 990.0 C1248.9 990.7 1254.2 989.7 1259.2 992.0 C1264.2 994.3 1267.8 998.9 1269.8 1004.0 C1271.8 1009.1 1274.0 1017.1 1271.1 1022.4 C1268.2 1027.7 1259.6 1030.1 1252.6 1035.6 C1245.5 1041.1 1234.1 1048.8 1228.8 1055.4 C1223.5 1062.0 1221.4 1069.3 1221.0 1075.2 C1220.6 1081.1 1223.6 1086.9 1226.2 1091.0 C1228.8 1095.1 1232.8 1096.0 1236.8 1100.0 C1240.8 1104.0 1247.8 1112.5 1250.0 1115.0" fill="none" stroke="#9fcaf5" stroke-width="1.2" stroke-linejoin="round"/>
<path d="M804.5 997.6 L806.1 992.7" fill="none" stroke="#9fcaf5" stroke-width="1.2" stroke-linejoin="round"/>
<path d="M804.5 997.6 C811.3 999.9 834.9 1008.8 845.2 1011.5 C855.5 1014.2 860.7 1014.2 866.4 1013.9 C872.1 1013.6 876.2 1011.5 879.5 1009.9 C882.8 1008.3 884.4 1007.9 886.0 1004.2 C887.6 1000.5 889.0 992.1 889.3 987.8 C889.6 983.4 889.5 983.0 887.6 978.1 C885.7 973.2 880.0 964.8 877.8 958.5 C875.6 952.2 875.3 945.0 874.6 940.6 C873.9 936.2 872.7 934.5 873.8 932.4 C874.9 930.3 875.8 929.2 881.1 928.3 C886.4 927.3 895.3 924.9 905.6 926.7 C915.9 928.5 934.7 935.2 943.1 938.9 C951.5 942.6 953.1 944.9 956.1 948.7 C959.1 952.5 959.9 957.4 961.0 961.8 C962.1 966.1 962.9 969.1 962.6 974.8 C962.3 980.5 961.8 988.4 959.4 996.0 C957.0 1003.6 950.7 1012.4 948.0 1020.5 C945.3 1028.7 942.8 1037.8 943.1 1044.9 C943.4 1052.0 946.9 1058.8 949.6 1062.9 C952.3 1067.0 955.0 1067.2 959.4 1069.4 C963.8 1071.6 968.6 1074.9 975.7 1075.9 C982.8 1076.9 991.4 1078.9 1002.0 1075.6 C1012.6 1072.2 1024.0 1065.3 1039.3 1055.8 C1054.6 1046.3 1083.1 1029.3 1093.9 1018.5 C1104.7 1007.7 1101.0 1000.3 1103.9 991.2 C1106.8 982.1 1108.4 970.0 1111.3 963.8 C1114.2 957.6 1117.5 954.7 1121.2 953.9 C1124.9 953.1 1130.4 955.2 1133.7 958.9 C1137.0 962.6 1137.0 972.2 1141.1 976.3 C1145.2 980.4 1147.7 981.9 1158.5 983.7 C1169.3 985.5 1189.4 984.5 1205.7 987.0 C1222.0 989.5 1246.6 994.9 1256.6 998.6 C1266.6 1002.3 1264.3 1005.2 1265.8 1009.2 C1267.3 1013.2 1268.4 1018.1 1265.8 1022.4 C1263.2 1026.7 1255.7 1029.9 1250.0 1035.0 C1244.3 1040.1 1235.9 1046.5 1231.5 1052.8 C1227.1 1059.1 1223.8 1066.2 1223.6 1072.6 C1223.4 1079.0 1227.3 1086.4 1230.2 1091.0 C1233.1 1095.6 1236.7 1096.5 1240.8 1100.0 C1244.9 1103.5 1252.6 1110.0 1255.0 1112.0" fill="none" stroke="#9fcaf5" stroke-width="1.2" stroke-linejoin="round"/>
<path d="M979.8 890.0 C979.7 892.7 981.3 902.5 979.0 906.3 C976.7 910.1 969.7 910.1 965.9 912.8 C962.1 915.5 959.1 918.5 956.1 922.6 C953.1 926.7 949.4 934.8 948.0 937.3" fill="none" stroke="#9fcaf5" stroke-width="1.2" stroke-linejoin="round"/>
<path d="M1202.6 403.3 C1203.0 406.5 1199.9 414.4 1204.8 422.5 C1209.7 430.6 1225.2 444.0 1232.0 451.9 C1238.8 459.8 1240.9 463.6 1245.6 470.0 C1250.3 476.4 1257.6 486.7 1260.0 490.0" fill="none" stroke="#9fcaf5" stroke-width="1.2" stroke-linejoin="round"/>
<path d="M1306.6 380.1 C1307.7 383.5 1312.1 395.2 1313.2 400.3 C1314.3 405.4 1313.9 408.0 1313.2 410.4 C1312.5 412.8 1309.5 412.0 1309.2 414.4 C1308.9 416.8 1311.4 421.5 1311.2 424.5 C1311.0 427.5 1310.6 429.6 1308.2 432.6 C1305.8 435.6 1298.3 439.4 1297.1 442.7 C1295.9 446.0 1301.1 449.7 1301.1 452.7 C1301.1 455.7 1299.1 457.3 1297.1 460.8 C1295.1 464.3 1290.7 469.7 1289.0 473.9 C1287.3 478.1 1289.0 482.3 1287.0 486.0 C1285.0 489.7 1280.6 492.9 1276.9 496.1 C1273.2 499.3 1267.0 503.5 1265.0 505.0" fill="none" stroke="#9fcaf5" stroke-width="1.2" stroke-linejoin="round"/>
<path d="M1419.7 385.4 C1421.0 392.2 1423.7 418.0 1427.8 426.2 C1431.9 434.4 1440.2 429.0 1444.1 434.4 C1447.9 439.8 1446.4 452.5 1450.9 458.8 C1455.4 465.1 1464.3 466.1 1471.3 472.4 C1478.3 478.7 1485.8 491.6 1493.0 496.8 C1500.2 502.0 1506.2 500.2 1514.8 503.6 C1523.4 507.0 1536.5 515.8 1544.7 517.2 C1552.9 518.6 1552.4 509.8 1563.7 511.8 C1575.0 513.9 1600.4 525.2 1612.6 529.5 C1624.8 533.8 1630.8 532.6 1637.1 537.6 C1643.4 542.6 1643.0 548.4 1650.7 559.3 C1658.4 570.2 1673.3 589.6 1683.3 602.8 C1693.2 615.9 1702.6 631.0 1710.4 638.2 C1718.2 645.5 1716.0 639.3 1730.0 646.3 C1744.0 653.3 1781.4 672.1 1794.4 680.0 C1807.4 687.9 1801.2 689.3 1807.9 693.5 C1814.6 697.7 1823.2 701.5 1834.8 705.0 C1846.3 708.5 1866.6 713.7 1877.2 714.7 C1887.8 715.7 1894.9 711.4 1898.4 710.8" fill="none" stroke="#9fcaf5" stroke-width="1.2" stroke-linejoin="round"/>
<path d="M1532.4 450.1 C1530.6 451.6 1522.9 452.4 1521.6 458.8 C1520.2 465.2 1522.3 480.1 1524.3 488.7 C1526.3 497.3 1532.2 506.8 1533.8 510.4" fill="none" stroke="#9fcaf5" stroke-width="1.2" stroke-linejoin="round"/>
<path d="M1645.2 496.8 L1637.1 528.1" fill="none" stroke="#9fcaf5" stroke-width="1.2" stroke-linejoin="round"/>
<path d="M1500.0 185.0 C1501.6 184.0 1506.5 180.0 1509.4 179.2 C1512.3 178.4 1515.8 178.6 1517.6 180.4 C1519.3 182.2 1517.0 187.7 1519.9 189.8 C1522.8 192.0 1530.9 193.5 1535.2 193.3 C1539.5 193.1 1540.8 188.2 1545.7 188.6 C1550.6 189.0 1558.8 194.1 1564.5 195.7 C1570.2 197.3 1574.0 196.6 1579.7 198.0 C1585.4 199.4 1592.2 202.5 1598.5 203.9 C1604.8 205.3 1610.3 204.0 1617.3 206.2 C1624.3 208.3 1635.0 216.6 1640.7 216.8 C1646.4 217.0 1648.8 210.5 1651.3 207.4 C1653.8 204.3 1653.1 200.0 1656.0 198.0 C1658.9 196.0 1664.0 195.6 1668.9 195.2 C1673.8 194.8 1677.1 194.1 1685.3 195.7 C1693.5 197.3 1706.8 203.6 1718.1 205.0 C1729.4 206.4 1743.9 201.9 1753.3 203.9 C1762.7 205.9 1769.9 213.7 1774.4 216.8 C1778.9 219.9 1779.7 219.9 1780.3 222.6 C1780.9 225.3 1775.8 230.5 1777.9 233.2 C1780.0 235.9 1789.0 234.5 1793.1 239.0 C1797.2 243.5 1798.0 256.7 1802.5 260.2 C1807.0 263.7 1818.3 257.7 1820.1 260.2 C1821.9 262.7 1813.1 269.5 1813.1 275.4 C1813.1 281.2 1815.2 291.8 1820.1 295.3 C1825.0 298.8 1838.3 294.7 1842.4 296.5 C1846.5 298.3 1839.6 301.2 1844.7 305.9 C1849.8 310.6 1869.4 319.6 1872.9 324.7 C1876.4 329.8 1865.1 332.3 1865.9 336.4 C1866.7 340.5 1876.8 344.6 1877.6 349.3 C1878.4 354.0 1867.0 359.6 1870.5 364.5 C1874.0 369.4 1893.9 372.7 1898.7 378.6 C1903.5 384.5 1899.2 391.8 1899.5 400.0 C1899.8 408.2 1900.4 423.3 1900.6 428.0" fill="none" stroke="#9fcaf5" stroke-width="1.2" stroke-linejoin="round"/>
<path d="M1896.0 597.0 C1896.5 604.2 1898.5 622.8 1899.0 640.0 C1899.5 657.2 1899.2 648.4 1899.2 700.0 C1899.2 751.6 1899.2 908.0 1899.2 949.6" fill="none" stroke="#9fcaf5" stroke-width="1.2" stroke-linejoin="round"/>
<path d="M1854.1 1109.5 C1856.7 1106.3 1863.7 1093.4 1869.5 1090.2 C1875.3 1087.0 1883.7 1091.2 1888.8 1090.2 C1893.9 1089.2 1898.4 1085.5 1900.3 1084.5" fill="none" stroke="#9fcaf5" stroke-width="1.2" stroke-linejoin="round"/>
<path d="M1480.0 185.0 L1500.0 185.0" fill="none" stroke="#9fcaf5" stroke-width="1.2" stroke-linejoin="round"/>
<path d="M1248.6 985.4 C1252.6 982.5 1266.2 970.7 1272.4 968.3 C1278.6 965.9 1282.3 968.1 1285.6 971.0 C1288.9 973.9 1291.1 979.9 1292.2 985.4 C1293.3 990.9 1290.0 998.8 1292.2 1003.9 C1294.4 1009.0 1304.3 1012.7 1305.4 1015.8 C1306.5 1018.9 1302.1 1019.5 1298.8 1022.4 C1295.5 1025.3 1285.6 1029.3 1285.6 1033.0 C1285.6 1036.7 1296.1 1041.1 1298.8 1044.8 C1301.5 1048.5 1302.4 1052.1 1301.5 1055.4 C1300.6 1058.7 1298.3 1063.5 1293.5 1064.6 C1288.7 1065.7 1277.7 1063.8 1272.4 1062.0 C1267.1 1060.2 1267.3 1054.7 1261.8 1054.0 C1256.3 1053.3 1239.8 1060.6 1239.4 1058.0 C1239.0 1055.4 1252.6 1044.1 1259.2 1038.2 C1265.8 1032.3 1273.9 1026.8 1279.0 1022.4 C1284.1 1018.0 1288.2 1013.7 1290.0 1012.0" fill="none" stroke="#f6e48a" stroke-width="2.8" stroke-linejoin="round" stroke-linecap="round"/>
<path d="M1265.8 985.4 C1266.9 988.3 1269.1 1000.6 1272.4 1002.6 C1275.7 1004.6 1283.4 998.2 1285.6 997.3" fill="none" stroke="#f6e48a" stroke-width="2.8" stroke-linejoin="round" stroke-linecap="round"/>
<path d="M1180.0 978.8 C1191.0 980.1 1230.6 983.5 1246.0 986.8 C1261.4 990.1 1265.8 996.9 1272.4 998.6 C1279.0 1000.4 1283.4 997.5 1285.6 997.3" fill="none" stroke="#f6e48a" stroke-width="2.8" stroke-linejoin="round" stroke-linecap="round"/>
<path d="M1225.0 680.0 C1227.8 680.8 1235.3 680.7 1241.8 684.6 C1248.3 688.5 1256.2 699.5 1264.2 703.3 C1272.2 707.1 1282.7 704.5 1290.0 707.6 C1297.3 710.7 1305.0 719.6 1308.0 722.0" fill="none" stroke="#f6e48a" stroke-width="2.8" stroke-linejoin="round" stroke-linecap="round"/>
<path d="M1845.1 779.5 C1846.2 777.9 1848.2 770.8 1851.6 769.7 C1854.9 768.6 1861.3 773.2 1865.2 772.9 C1869.1 772.6 1870.9 768.8 1875.0 768.0 C1879.1 767.2 1885.9 766.8 1889.7 768.0 C1893.5 769.2 1899.9 771.6 1897.8 775.1 C1895.7 778.6 1885.3 787.8 1877.2 789.2 C1869.1 790.7 1854.2 785.4 1848.9 783.8 C1843.6 782.2 1845.7 780.2 1845.1 779.5" fill="none" stroke="#f6e48a" stroke-width="2.8" stroke-linejoin="round" stroke-linecap="round"/>
<path d="M1851.0 776.0 L1886.0 782.0" fill="none" stroke="#f6e48a" stroke-width="2.8" stroke-linejoin="round" stroke-linecap="round"/>
<path d="M1860.0 772.0 L1857.0 786.0" fill="none" stroke="#f6e48a" stroke-width="2.8" stroke-linejoin="round" stroke-linecap="round"/>
<path d="M1868.0 774.0 L1865.0 787.0" fill="none" stroke="#f6e48a" stroke-width="2.8" stroke-linejoin="round" stroke-linecap="round"/>
<path d="M1876.0 776.0 L1873.0 788.0" fill="none" stroke="#f6e48a" stroke-width="2.8" stroke-linejoin="round" stroke-linecap="round"/>
<path d="M1894.6 747.9 C1895.1 749.5 1899.2 755.2 1897.8 757.7 C1896.3 760.2 1887.9 761.1 1885.9 762.6 C1883.9 764.1 1885.9 766.3 1885.9 767.0" fill="none" stroke="#f6e48a" stroke-width="2.8" stroke-linejoin="round" stroke-linecap="round"/>
<path d="M1897.8 774.6 L1876.0 800.0" fill="none" stroke="#f6e48a" stroke-width="2.8" stroke-linejoin="round" stroke-linecap="round"/>
<path d="M471.8 359.1 C481.2 362.5 512.9 376.3 528.1 379.7 C543.3 383.1 554.7 378.9 563.1 379.7 C571.5 380.5 568.9 378.8 578.6 384.4 C588.3 390.0 609.0 407.4 621.3 413.5 C633.6 419.6 636.2 412.1 652.4 421.2 C668.6 430.2 700.9 458.7 718.4 467.8 C735.9 476.9 744.2 470.4 757.2 475.6 C770.2 480.8 774.7 490.8 796.1 498.9 C817.5 507.0 860.8 515.4 885.4 524.1 C910.0 532.8 927.4 541.6 943.6 551.3 C959.8 561.0 973.0 574.9 982.4 582.4 C991.8 589.9 996.0 590.8 999.9 596.0 C1003.8 601.2 1005.4 606.1 1005.7 613.5 C1006.0 620.9 1000.5 631.6 1001.8 640.6 C1003.1 649.6 1007.7 659.4 1013.5 667.8 C1019.3 676.2 1032.9 687.2 1036.8 691.1" fill="none" stroke="#f6e48a" stroke-width="2.8" stroke-linejoin="round" stroke-linecap="round"/>
<path d="M999.8 594.8 C1008.3 594.0 1038.7 591.8 1050.7 589.8 C1062.7 587.8 1066.2 584.1 1071.8 583.0 C1077.4 581.9 1082.1 583.0 1084.2 583.0" fill="none" stroke="#f6e48a" stroke-width="2.8" stroke-linejoin="round" stroke-linecap="round"/>
<path d="M1039.5 560.0 C1041.4 565.0 1043.2 581.5 1050.7 589.8 C1058.2 598.1 1078.6 606.4 1084.2 609.7" fill="none" stroke="#f6e48a" stroke-width="2.8" stroke-linejoin="round" stroke-linecap="round"/>
<path d="M1050.7 589.8 C1052.2 587.9 1057.1 582.3 1059.4 578.6 C1061.7 574.9 1063.5 569.4 1064.3 567.5" fill="none" stroke="#f6e48a" stroke-width="2.8" stroke-linejoin="round" stroke-linecap="round"/>
<path d="M1051.9 689.2 C1054.6 689.6 1062.6 689.8 1068.0 691.7 C1073.4 693.6 1081.5 699.0 1084.2 700.4" fill="none" stroke="#f6e48a" stroke-width="2.8" stroke-linejoin="round" stroke-linecap="round"/>
<path d="M450.5 771.9 C457.0 773.3 474.4 775.4 489.3 780.4 C504.2 785.4 515.8 795.6 539.8 801.8 C563.8 807.9 609.7 814.5 633.0 817.3 C656.3 820.1 660.2 821.1 679.6 818.5 C699.0 815.9 710.7 811.7 749.5 801.8 C788.3 791.9 877.6 774.0 912.5 759.1 C947.4 744.2 941.0 720.3 959.1 712.5 C977.2 704.7 1008.3 714.1 1021.3 712.5 C1034.2 710.9 1034.2 704.4 1036.8 702.8" fill="none" stroke="#f6e48a" stroke-width="2.8" stroke-linejoin="round" stroke-linecap="round"/>
<path d="M767.7 1110.2 C777.2 1105.3 809.3 1090.5 825.0 1080.6 C840.7 1070.7 845.4 1070.1 862.0 1051.0 C878.6 1031.9 904.5 989.5 924.8 966.1 C945.1 942.7 963.0 933.4 983.9 910.6 C1004.8 887.8 1033.7 859.4 1050.0 829.3 C1066.3 799.2 1073.2 751.5 1081.5 730.0 C1089.8 708.5 1088.7 713.9 1100.0 700.0 C1111.3 686.1 1130.8 660.6 1149.1 646.7 C1167.4 632.8 1195.7 624.6 1209.7 616.4 C1223.7 608.2 1221.3 603.5 1233.0 597.7 C1244.7 591.9 1266.4 585.3 1279.6 581.4 C1292.8 577.5 1303.8 574.4 1312.2 574.4 C1320.6 574.4 1318.9 580.9 1330.0 581.1 C1341.1 581.3 1364.9 575.9 1378.9 575.7 C1392.9 575.5 1388.8 573.4 1414.2 579.7 C1439.6 586.0 1505.3 606.0 1531.1 613.7 C1556.9 621.4 1535.9 616.4 1569.1 625.9 C1602.2 635.4 1699.2 661.8 1730.0 670.8 C1760.8 679.8 1742.2 675.6 1753.9 680.0 C1765.6 684.4 1776.4 684.5 1800.2 697.3 C1824.0 710.1 1880.5 747.0 1896.5 757.0" fill="none" stroke="#f6e48a" stroke-width="2.8" stroke-linejoin="round" stroke-linecap="round"/>
<path d="M880.4 1023.4 C881.6 1024.3 886.6 1021.2 887.8 1028.9 C889.0 1036.6 885.3 1058.7 887.8 1069.5 C890.3 1080.3 900.1 1089.6 902.6 1093.6" fill="none" stroke="#f6e48a" stroke-width="2.8" stroke-linejoin="round" stroke-linecap="round"/>
<path d="M1006.0 851.5 L1050.0 799.8" fill="none" stroke="#f6e48a" stroke-width="2.8" stroke-linejoin="round" stroke-linecap="round"/>
<path d="M529.8 177.2 C529.3 178.9 526.3 182.6 526.8 187.5 C527.3 192.4 528.3 202.8 532.7 206.7 C537.1 210.6 545.5 208.6 553.4 211.1 C561.3 213.6 575.0 218.7 579.9 221.4 C584.8 224.1 578.5 225.3 582.9 227.3 C587.3 229.3 601.6 231.0 606.5 233.2 C611.4 235.4 609.4 240.1 612.4 240.6 C615.4 241.1 621.2 235.0 624.2 236.2 C627.2 237.4 627.2 244.1 630.1 248.0 C633.0 251.9 637.5 257.1 641.9 259.8 C646.3 262.5 652.2 264.2 656.6 264.2 C661.0 264.2 667.9 262.5 668.4 259.8 C668.9 257.1 660.1 251.4 659.6 248.0 C659.1 244.6 661.6 241.6 665.5 239.1 C669.4 236.6 673.4 234.4 683.2 233.2 C693.0 232.0 707.8 230.3 724.5 231.8 C741.2 233.3 766.3 238.4 783.5 242.1 C800.7 245.8 814.9 252.7 827.7 253.9 C840.5 255.1 847.9 249.0 860.2 249.5 C872.5 250.0 891.7 254.1 901.5 256.8 C911.3 259.5 912.3 262.8 919.2 265.7 C926.1 268.6 940.3 271.6 942.8 274.5 C945.2 277.4 932.9 279.9 933.9 283.4 C934.9 286.8 943.3 291.8 948.7 295.2 C954.1 298.6 962.0 303.5 966.4 304.0 C970.8 304.5 969.6 298.8 975.2 298.1 C980.8 297.4 993.2 301.1 1000.0 299.6 C1006.8 298.1 1009.2 290.4 1015.7 289.3 C1022.2 288.2 1033.4 291.2 1039.3 293.2 C1045.2 295.2 1046.4 298.1 1051.0 301.5 C1055.6 304.9 1061.2 310.3 1066.9 313.9 C1072.6 317.5 1080.8 319.6 1085.0 323.0 C1089.2 326.4 1085.8 331.5 1091.8 334.3 C1097.8 337.1 1115.2 336.5 1121.2 339.9 C1127.2 343.3 1125.0 351.2 1128.0 354.6 C1131.0 358.0 1135.5 360.7 1139.3 360.3 C1143.1 359.9 1146.5 356.0 1150.6 352.4 C1154.7 348.8 1161.1 339.9 1164.1 338.8 C1167.1 337.7 1169.5 340.0 1168.7 345.6 C1168.0 351.2 1161.5 365.2 1159.6 372.7 C1157.7 380.2 1159.7 385.5 1157.4 390.8 C1155.1 396.1 1146.8 400.2 1146.0 404.4 C1145.2 408.5 1147.9 412.9 1152.8 415.7 C1157.7 418.5 1168.6 423.2 1175.4 421.3 C1182.2 419.4 1190.1 411.4 1193.5 404.4 C1196.9 397.4 1193.5 387.8 1195.8 379.5 C1198.1 371.2 1201.4 358.0 1207.1 354.6 C1212.8 351.2 1221.8 360.3 1229.7 359.2 C1237.6 358.1 1251.9 354.2 1254.6 347.8 C1257.2 341.4 1249.8 327.5 1245.6 320.7 C1241.4 313.9 1229.0 312.6 1229.7 307.1 C1230.5 301.6 1246.7 291.1 1250.1 287.9" fill="none" stroke="#f6e48a" stroke-width="2.8" stroke-linejoin="round" stroke-linecap="round"/>
<path d="M997.9 336.5 C1002.2 337.1 1017.9 338.4 1023.9 339.9 C1029.9 341.4 1032.2 342.4 1034.1 345.6 C1036.0 348.8 1033.5 355.2 1035.2 359.2 C1036.9 363.1 1042.6 363.6 1044.3 369.3 C1046.0 375.0 1045.0 381.6 1045.4 393.1 C1045.8 404.6 1044.4 427.0 1046.5 438.3 C1048.6 449.6 1054.3 454.5 1057.8 460.9 C1061.3 467.3 1060.9 468.6 1067.6 476.6 C1074.3 484.7 1088.9 503.0 1097.8 509.2 C1106.7 515.4 1117.2 513.1 1121.1 513.9" fill="none" stroke="#f6e48a" stroke-width="2.8" stroke-linejoin="round" stroke-linecap="round"/>
<path d="M1112.1 500.0 C1120.8 495.0 1155.0 481.0 1164.1 470.0 C1173.1 459.0 1163.0 442.9 1166.4 433.8 C1169.8 424.8 1179.6 421.4 1184.5 415.7 C1189.4 410.0 1195.4 406.7 1195.8 399.9 C1196.2 393.1 1184.9 382.6 1186.8 375.0 C1188.7 367.4 1203.7 358.0 1207.1 354.6" fill="none" stroke="#f6e48a" stroke-width="2.8" stroke-linejoin="round" stroke-linecap="round"/>
<path d="M1164.1 470.0 C1169.8 468.3 1189.4 460.9 1198.1 459.8 C1206.8 458.7 1211.3 460.0 1216.2 463.2 C1221.1 466.4 1224.5 472.9 1227.5 479.0 C1230.5 485.1 1233.1 496.5 1234.2 500.0" fill="none" stroke="#f6e48a" stroke-width="2.8" stroke-linejoin="round" stroke-linecap="round"/>
<path d="M1213.3 378.0 C1216.7 379.2 1227.6 382.2 1233.5 385.1 C1239.4 388.0 1244.7 391.5 1248.6 395.2 C1252.5 398.9 1256.0 403.6 1256.7 407.3 C1257.4 411.0 1254.1 414.5 1252.7 417.4 C1251.3 420.3 1247.3 421.6 1248.6 424.5 C1249.9 427.4 1257.0 432.8 1260.7 434.6 C1264.4 436.5 1268.3 437.0 1270.8 435.6 C1273.3 434.2 1275.1 431.2 1275.9 426.5 C1276.8 421.8 1275.1 411.7 1275.9 407.3 C1276.7 402.9 1279.4 401.8 1280.9 400.3 C1282.4 398.8 1282.3 400.0 1285.0 398.3 C1287.7 396.6 1293.5 392.2 1297.0 390.0 C1300.5 387.8 1303.8 386.5 1306.1 385.1 C1308.4 383.7 1310.3 382.4 1311.1 381.8" fill="none" stroke="#f6e48a" stroke-width="2.8" stroke-linejoin="round" stroke-linecap="round"/>
<path d="M1180.0 375.0 C1182.2 375.2 1187.5 375.5 1193.1 376.0 C1198.6 376.5 1204.5 377.3 1213.3 378.0 C1222.0 378.7 1240.2 379.8 1245.6 380.1" fill="none" stroke="#f6e48a" stroke-width="2.8" stroke-linejoin="round" stroke-linecap="round"/>
<path d="M1311.2 381.1 C1311.9 383.6 1313.9 392.3 1315.2 396.2 C1316.5 400.1 1317.6 402.3 1319.3 404.3 C1321.0 406.3 1324.5 406.6 1325.3 408.3 C1326.1 410.0 1325.0 411.7 1324.3 414.4 C1323.6 417.1 1323.0 420.5 1321.3 424.5 C1319.6 428.5 1315.5 434.2 1314.2 438.6 C1312.9 443.0 1312.9 447.8 1313.2 450.7 C1313.5 453.6 1313.9 453.1 1316.2 455.8 C1318.5 458.5 1324.2 464.5 1327.3 466.9 C1330.4 469.3 1333.7 469.5 1335.0 470.0" fill="none" stroke="#f6e48a" stroke-width="2.8" stroke-linejoin="round" stroke-linecap="round"/>
<path d="M1314.2 412.4 L1321.3 414.4" fill="none" stroke="#f6e48a" stroke-width="2.8" stroke-linejoin="round" stroke-linecap="round"/>
<path d="M1316.0 420.0 C1315.2 424.4 1312.9 441.6 1311.2 446.7 C1309.5 451.8 1306.8 448.1 1306.1 450.7 C1305.4 453.2 1305.6 458.8 1307.0 462.0 C1308.4 465.2 1314.4 467.6 1314.5 470.0 C1314.6 472.4 1308.7 475.5 1307.5 476.6" fill="none" stroke="#f6e48a" stroke-width="2.8" stroke-linejoin="round" stroke-linecap="round"/>
<path d="M1320.2 454.1 L1330.0 452.0" fill="none" stroke="#f6e48a" stroke-width="2.8" stroke-linejoin="round" stroke-linecap="round"/>
<path d="M1367.7 309.4 C1381.4 309.0 1427.4 306.2 1450.0 307.1 C1472.6 308.0 1490.6 311.6 1503.4 314.9 C1516.2 318.2 1515.8 324.4 1527.0 326.7 C1538.2 329.0 1559.8 325.7 1570.3 328.6 C1580.8 331.6 1582.8 338.8 1590.0 344.4 C1597.2 350.0 1598.5 362.2 1613.6 362.0 C1628.7 361.8 1659.3 347.7 1680.6 343.4 C1701.9 339.1 1731.0 338.5 1741.6 336.4 C1752.1 334.2 1749.0 332.9 1743.9 330.5 C1738.8 328.1 1721.4 325.6 1711.1 322.3 C1700.8 319.0 1686.5 313.7 1681.8 310.6 C1677.1 307.5 1680.0 304.9 1682.9 303.5 C1685.8 302.1 1695.8 304.7 1699.3 302.4 C1702.8 300.1 1702.0 294.0 1704.0 289.5 C1706.0 285.0 1710.1 279.7 1711.1 275.4 C1712.1 271.1 1714.6 266.4 1709.9 263.7 C1705.2 261.0 1690.1 261.6 1682.9 259.0 C1675.7 256.4 1669.6 251.1 1666.5 248.4 C1663.4 245.7 1671.8 245.1 1664.2 242.6 C1656.6 240.1 1627.5 235.2 1620.8 233.2 C1614.1 231.2 1625.3 233.5 1624.3 230.8 C1623.3 228.1 1623.1 222.7 1614.9 216.8 C1606.7 211.0 1581.5 200.6 1575.0 195.7 C1568.5 190.8 1582.6 190.4 1576.2 187.5 C1569.8 184.6 1543.0 179.7 1536.4 178.1" fill="none" stroke="#f6e48a" stroke-width="2.8" stroke-linejoin="round" stroke-linecap="round"/>
<path d="M1367.7 309.4 C1365.8 312.0 1358.0 319.3 1356.4 325.2 C1354.8 331.1 1356.1 340.1 1358.0 345.0 C1359.9 349.9 1361.9 347.7 1367.7 354.6 C1373.5 361.5 1389.2 378.4 1392.6 386.3 C1396.0 394.2 1385.8 400.6 1388.0 402.1 C1390.2 403.6 1402.3 399.8 1406.1 395.3 C1409.9 390.8 1403.3 380.3 1410.6 375.0 C1417.9 369.7 1437.2 364.2 1450.0 363.7 C1462.8 363.2 1476.2 371.5 1487.7 371.9 C1499.2 372.3 1512.7 370.3 1519.2 366.0 C1525.8 361.7 1523.7 348.3 1527.0 346.3 C1530.3 344.3 1524.4 351.6 1538.8 354.2 C1553.2 356.8 1601.1 360.7 1613.6 362.0" fill="none" stroke="#f6e48a" stroke-width="2.8" stroke-linejoin="round" stroke-linecap="round"/>
<path d="M1330.0 452.0 C1339.0 451.1 1370.3 448.9 1384.3 446.6 C1398.3 444.3 1405.1 437.5 1414.2 438.4 C1423.3 439.3 1429.6 443.2 1438.7 452.0 C1447.8 460.8 1463.4 478.5 1468.6 491.4 C1473.8 504.3 1473.2 513.9 1470.0 529.5 C1466.8 545.1 1453.0 575.9 1449.6 585.2" fill="none" stroke="#f6e48a" stroke-width="2.8" stroke-linejoin="round" stroke-linecap="round"/>
<path d="M1384.3 448.0 C1383.4 450.2 1378.9 457.7 1378.9 461.5 C1378.9 465.3 1383.4 469.4 1384.3 471.0" fill="none" stroke="#f6e48a" stroke-width="2.8" stroke-linejoin="round" stroke-linecap="round"/>
<path d="M1472.7 528.1 C1475.4 523.4 1482.9 504.1 1489.0 499.6 C1495.1 495.1 1502.3 498.2 1509.3 500.9 C1516.3 503.6 1527.7 508.9 1531.1 515.9 C1534.5 522.9 1526.5 534.4 1529.7 543.0 C1532.9 551.6 1549.6 556.0 1550.1 567.5 C1550.5 579.0 1535.4 604.8 1532.4 612.3" fill="none" stroke="#f6e48a" stroke-width="2.8" stroke-linejoin="round" stroke-linecap="round"/>
<path d="M1495.8 496.8 C1496.2 494.8 1493.5 486.0 1498.5 484.6 C1503.5 483.2 1521.2 488.0 1525.7 488.7" fill="none" stroke="#f6e48a" stroke-width="2.8" stroke-linejoin="round" stroke-linecap="round"/>
<path d="M1618.0 475.1 C1617.1 484.2 1612.4 519.3 1612.6 529.5 C1612.8 539.7 1619.9 530.4 1619.4 536.3 C1619.0 542.2 1608.3 556.2 1609.9 564.8 C1611.5 573.4 1625.7 584.0 1628.9 587.9" fill="none" stroke="#f6e48a" stroke-width="2.8" stroke-linejoin="round" stroke-linecap="round"/>
<path d="M1609.9 575.7 C1606.7 577.5 1595.9 578.8 1590.9 586.5 C1585.9 594.2 1581.8 615.9 1580.0 621.8" fill="none" stroke="#f6e48a" stroke-width="2.8" stroke-linejoin="round" stroke-linecap="round"/>
<path d="M1569.1 627.3 C1569.1 628.9 1563.2 629.3 1569.1 636.8 C1575.0 644.3 1592.7 666.4 1604.5 672.1 C1616.3 677.8 1631.6 669.7 1639.8 670.8 C1648.0 671.9 1651.1 677.5 1653.4 678.9" fill="none" stroke="#f6e48a" stroke-width="2.8" stroke-linejoin="round" stroke-linecap="round"/>
<path d="M1639.8 526.7 C1640.7 531.2 1642.5 547.1 1645.2 553.9 C1647.9 560.7 1649.8 562.1 1656.1 567.5 C1662.4 572.9 1673.4 580.2 1683.3 586.5 C1693.2 592.8 1705.8 600.1 1715.2 605.0 C1724.6 609.9 1728.5 610.3 1739.4 616.1 C1750.3 621.9 1770.5 635.0 1780.4 640.0 C1790.3 645.0 1793.8 649.1 1799.0 646.0 C1804.2 642.9 1809.3 625.2 1811.4 621.1" fill="none" stroke="#f6e48a" stroke-width="2.8" stroke-linejoin="round" stroke-linecap="round"/>
<path d="M1715.2 577.0 L1724.5 601.2" fill="none" stroke="#f6e48a" stroke-width="2.8" stroke-linejoin="round" stroke-linecap="round"/>
<path d="M1799.0 646.0 L1814.0 685.7" fill="none" stroke="#f6e48a" stroke-width="2.8" stroke-linejoin="round" stroke-linecap="round"/>
<path d="M1801.5 644.7 C1807.7 645.3 1831.3 647.4 1838.8 648.4 C1846.2 649.4 1842.9 643.1 1846.2 651.0 C1849.5 658.9 1856.5 688.2 1858.6 695.7" fill="none" stroke="#f6e48a" stroke-width="2.8" stroke-linejoin="round" stroke-linecap="round"/>
<path d="M1863.6 690.7 C1865.5 691.1 1870.7 690.7 1874.8 693.2 C1878.9 695.7 1886.1 703.5 1888.4 705.6" fill="none" stroke="#f6e48a" stroke-width="2.8" stroke-linejoin="round" stroke-linecap="round"/>
<path d="M1821.4 496.0 C1823.9 500.5 1833.2 515.4 1836.3 523.0 C1839.4 530.6 1836.3 536.6 1840.0 541.6 C1843.7 546.6 1855.0 548.4 1858.7 552.8 C1862.4 557.1 1864.3 560.6 1862.4 567.7 C1860.5 574.8 1853.7 586.3 1847.5 595.6 C1841.3 604.9 1829.7 616.2 1825.1 623.6 C1820.5 631.0 1821.0 634.6 1820.0 640.0 C1819.0 645.4 1819.1 653.2 1818.9 655.9" fill="none" stroke="#f6e48a" stroke-width="2.8" stroke-linejoin="round" stroke-linecap="round"/>
<path d="M1819.6 543.5 L1814.0 640.0" fill="none" stroke="#f6e48a" stroke-width="2.8" stroke-linejoin="round" stroke-linecap="round"/>
<path d="M1819.6 555.6 C1824.7 556.4 1844.9 558.1 1850.3 560.2 C1855.7 562.3 1851.7 566.7 1852.0 568.0" fill="none" stroke="#f6e48a" stroke-width="2.8" stroke-linejoin="round" stroke-linecap="round"/>
<path d="M1819.6 565.8 L1894.1 578.9" fill="none" stroke="#f6e48a" stroke-width="2.8" stroke-linejoin="round" stroke-linecap="round"/>
<path d="M1851.2 482.0 C1858.0 485.1 1884.1 494.4 1892.2 500.6 C1900.3 506.8 1899.1 511.8 1899.7 519.2 C1900.3 526.7 1895.9 535.3 1895.9 545.3 C1895.9 555.2 1900.3 571.8 1899.7 578.9 C1899.1 586.0 1899.7 578.0 1892.2 588.2 C1884.8 598.4 1862.7 629.5 1855.0 640.0 C1847.3 650.5 1847.7 649.2 1846.2 651.0" fill="none" stroke="#f6e48a" stroke-width="2.8" stroke-linejoin="round" stroke-linecap="round"/>
<path d="M1700.3 485.7 C1699.4 483.2 1693.8 475.1 1694.7 470.8 C1695.6 466.5 1700.9 462.4 1705.9 459.6 C1710.9 456.8 1720.8 456.2 1724.5 454.0 C1728.2 451.8 1723.3 446.6 1728.3 446.6 C1733.3 446.6 1744.4 453.7 1754.3 454.0 C1764.2 454.3 1781.7 449.0 1787.9 448.4 C1794.1 447.8 1786.6 447.8 1791.6 450.3 C1796.6 452.8 1807.1 458.4 1817.7 463.4 C1828.3 468.4 1848.2 476.4 1855.0 480.1 C1861.8 483.8 1855.6 486.0 1858.7 485.7 C1861.8 485.4 1866.6 481.9 1873.6 478.3 C1880.6 474.7 1896.1 466.6 1900.6 464.3" fill="none" stroke="#f6e48a" stroke-width="2.8" stroke-linejoin="round" stroke-linecap="round"/>
<path d="M1787.9 429.8 L1787.9 448.4" fill="none" stroke="#f6e48a" stroke-width="2.8" stroke-linejoin="round" stroke-linecap="round"/>
<path d="M1851.2 450.3 L1897.8 443.8" fill="none" stroke="#f6e48a" stroke-width="2.8" stroke-linejoin="round" stroke-linecap="round"/>
<path d="M1330.0 573.5 C1336.8 573.0 1362.6 569.4 1370.8 570.2 C1379.0 571.0 1381.2 573.9 1378.9 578.4 C1376.6 582.9 1361.3 592.0 1357.2 597.4 C1353.1 602.8 1350.9 601.0 1354.5 611.0 C1358.1 621.0 1369.1 642.4 1378.9 657.2 C1388.7 672.0 1403.9 689.3 1413.4 700.0 C1422.9 710.7 1431.1 716.7 1436.0 721.6 C1440.9 726.5 1432.7 722.6 1443.0 729.5 C1453.3 736.4 1482.9 753.2 1498.0 763.0 C1513.1 772.8 1534.9 781.3 1533.4 788.5 C1531.9 795.7 1504.8 799.7 1489.1 806.2 C1473.4 812.8 1447.0 822.5 1439.0 827.8 C1431.0 833.0 1440.2 834.1 1441.0 837.7 C1441.8 841.3 1443.5 847.5 1444.0 849.5" fill="none" stroke="#f6e48a" stroke-width="2.8" stroke-linejoin="round" stroke-linecap="round"/>
<path d="M1436.0 723.6 C1431.6 728.2 1412.3 743.2 1409.5 751.1 C1406.7 759.0 1413.7 765.2 1419.3 770.8 C1424.9 776.4 1439.0 782.3 1443.0 784.6" fill="none" stroke="#f6e48a" stroke-width="2.8" stroke-linejoin="round" stroke-linecap="round"/>
<path d="M1380.0 855.4 C1386.5 852.1 1409.5 838.0 1419.3 835.7 C1429.1 833.4 1435.7 840.6 1439.0 841.6" fill="none" stroke="#f6e48a" stroke-width="2.8" stroke-linejoin="round" stroke-linecap="round"/>
<path d="M1441.0 829.8 C1448.9 829.6 1481.3 825.5 1488.2 828.8 C1495.1 832.1 1486.7 843.4 1482.3 849.5 C1477.9 855.6 1464.5 860.0 1461.6 865.2 C1458.6 870.4 1459.0 873.2 1464.6 880.9 C1470.1 888.6 1484.1 898.9 1494.9 911.4 C1505.7 923.9 1528.5 933.6 1529.3 955.7 C1530.1 977.8 1503.9 1023.6 1499.8 1044.1 C1495.7 1064.6 1511.2 1070.4 1504.7 1078.6 C1498.2 1086.8 1479.3 1099.9 1460.5 1093.3 C1441.7 1086.7 1406.3 1046.6 1391.6 1039.2 C1376.8 1031.8 1382.7 1045.4 1372.0 1049.1 C1361.3 1052.8 1344.1 1059.0 1327.7 1061.4 C1311.3 1063.9 1288.3 1065.0 1273.6 1063.8 C1258.8 1062.6 1244.9 1055.6 1239.2 1054.0" fill="none" stroke="#f6e48a" stroke-width="2.8" stroke-linejoin="round" stroke-linecap="round"/>
<path d="M1682.9 769.8 C1687.0 771.4 1698.8 779.3 1707.4 779.6 C1716.0 779.9 1720.5 778.7 1734.7 771.7 C1748.9 764.7 1780.2 746.7 1792.4 737.8 C1804.6 728.9 1803.4 723.6 1807.9 718.5 C1812.4 713.4 1817.5 708.9 1819.4 707.0" fill="none" stroke="#f6e48a" stroke-width="2.8" stroke-linejoin="round" stroke-linecap="round"/>
<path d="M1700.0 1096.0 C1703.8 1091.5 1714.1 1079.9 1723.1 1069.0 C1732.1 1058.1 1738.5 1052.6 1753.9 1030.5 C1769.3 1008.4 1798.6 963.8 1815.6 936.2 C1832.6 908.6 1849.0 882.2 1856.0 864.9 C1863.0 847.6 1855.7 841.8 1857.9 832.2 C1860.2 822.6 1863.1 816.7 1869.5 807.1 C1875.9 797.5 1892.0 779.9 1896.5 774.4" fill="none" stroke="#f6e48a" stroke-width="2.8" stroke-linejoin="round" stroke-linecap="round"/>
<path d="M1612.9 1105.6 C1620.3 1103.5 1644.0 1094.9 1657.1 1093.3 C1670.2 1091.7 1684.3 1095.3 1691.5 1095.8 C1698.7 1096.2 1698.6 1096.0 1700.0 1096.0" fill="none" stroke="#f6e48a" stroke-width="2.8" stroke-linejoin="round" stroke-linecap="round"/>
<path d="M1798.2 697.3 C1808.8 696.7 1849.0 694.1 1861.8 693.5 C1874.6 692.9 1870.8 691.6 1875.3 693.5 C1879.8 695.4 1886.5 703.1 1888.8 705.0" fill="none" stroke="#f6e48a" stroke-width="2.8" stroke-linejoin="round" stroke-linecap="round"/>
<path d="M1320.4 862.2 C1327.4 868.4 1353.1 899.1 1362.1 899.1 C1371.1 899.1 1376.9 867.5 1374.4 862.2 C1372.0 856.9 1351.9 866.4 1347.4 867.2" fill="none" stroke="#f6e48a" stroke-width="2.8" stroke-linejoin="round" stroke-linecap="round"/>
<path d="M1374.4 862.2 C1381.4 857.3 1405.4 836.1 1416.2 832.7 C1427.0 829.3 1435.2 840.1 1439.0 841.6" fill="none" stroke="#f6e48a" stroke-width="2.8" stroke-linejoin="round" stroke-linecap="round"/>
<path d="M1362.1 901.6 C1350.6 915.5 1305.6 967.0 1293.3 985.1 C1281.0 1003.2 1289.2 1005.9 1288.4 1010.0" fill="none" stroke="#f6e48a" stroke-width="2.8" stroke-linejoin="round" stroke-linecap="round"/>
<path d="M1086.8 830.3 C1087.6 837.7 1090.9 863.4 1091.7 874.5 C1092.5 885.6 1093.7 884.1 1091.7 896.7 C1089.8 909.3 1084.1 934.5 1080.0 950.0 C1075.9 965.5 1069.3 980.0 1067.2 990.0 C1065.1 1000.0 1064.8 1004.8 1067.2 1009.7 C1069.7 1014.6 1077.8 1022.1 1081.9 1019.6 C1086.0 1017.1 1089.7 999.1 1091.7 995.0 C1093.8 990.9 1092.6 1000.3 1094.2 995.0 C1095.8 989.7 1098.3 970.4 1101.6 963.0 C1104.9 955.6 1106.5 951.9 1113.9 950.7 C1121.4 949.5 1142.2 957.3 1146.3 955.7 C1150.4 954.1 1136.8 945.8 1138.4 940.9 C1140.0 936.0 1153.7 932.8 1155.7 926.2 C1157.8 919.7 1157.3 905.7 1150.7 901.6 C1144.1 897.5 1123.7 904.9 1116.3 901.6 C1108.9 898.3 1110.6 886.4 1106.5 881.9 C1102.4 877.4 1094.2 875.7 1091.7 874.5" fill="none" stroke="#f6e48a" stroke-width="2.8" stroke-linejoin="round" stroke-linecap="round"/>
<path d="M1113.9 950.7 C1119.2 953.6 1135.6 963.1 1145.8 968.0 C1156.0 972.9 1159.7 977.4 1175.3 980.2 C1190.9 983.1 1222.8 983.1 1239.2 985.1 C1255.6 987.1 1264.6 987.6 1273.6 992.5 C1282.6 997.4 1293.3 1006.9 1293.3 1014.7 C1293.3 1022.5 1281.8 1031.8 1273.6 1039.2 C1265.4 1046.6 1249.0 1055.6 1244.1 1058.9" fill="none" stroke="#f6e48a" stroke-width="2.8" stroke-linejoin="round" stroke-linecap="round"/>
<path d="M1254.0 968.0 C1259.7 968.4 1281.9 966.7 1288.4 970.4 C1295.0 974.1 1292.5 986.7 1293.3 990.0" fill="none" stroke="#f6e48a" stroke-width="2.8" stroke-linejoin="round" stroke-linecap="round"/>
<path d="M1032.6 527.8 C1033.4 524.7 1031.5 517.7 1037.3 509.2 C1043.1 500.7 1062.5 482.0 1067.6 476.6" fill="none" stroke="#f6e48a" stroke-width="2.8" stroke-linejoin="round" stroke-linecap="round"/>
<path d="M1030.3 532.5 C1029.1 540.3 1025.6 568.6 1023.3 579.1 C1021.0 589.6 1017.5 592.7 1016.3 595.4" fill="none" stroke="#f6e48a" stroke-width="2.8" stroke-linejoin="round" stroke-linecap="round"/>
<path d="M1007.0 537.2 L1025.6 539.5" fill="none" stroke="#f6e48a" stroke-width="2.8" stroke-linejoin="round" stroke-linecap="round"/>
<path d="M1000.0 713.0 C1004.7 712.0 1020.6 708.9 1028.0 707.2 C1035.4 705.5 1040.0 701.1 1044.3 702.6 C1048.6 704.1 1052.0 714.2 1053.6 716.5" fill="none" stroke="#f6e48a" stroke-width="2.8" stroke-linejoin="round" stroke-linecap="round"/>
<path d="M1252.7 452.7 L1260.7 470.9" fill="none" stroke="#f6e48a" stroke-width="2.8" stroke-linejoin="round" stroke-linecap="round"/>
<path d="M1358.8 488.2 C1359.6 491.3 1366.5 498.3 1363.4 506.9 C1360.3 515.4 1345.5 530.2 1340.1 539.5 C1334.7 548.8 1330.8 557.0 1330.8 562.8 C1330.8 568.6 1338.5 572.5 1340.1 574.4" fill="none" stroke="#f6e48a" stroke-width="2.8" stroke-linejoin="round" stroke-linecap="round"/>
<path d="M1040.7 701.6 C1040.2 704.8 1038.7 714.3 1038.0 721.0 C1037.3 727.7 1035.6 738.1 1036.6 741.8 C1037.6 745.5 1042.7 743.0 1043.9 743.3" fill="none" stroke="#f6e48a" stroke-width="2.8" stroke-linejoin="round" stroke-linecap="round"/>
<path d="M1052.0 704.1 C1052.4 705.7 1053.9 709.5 1054.3 713.8 C1054.7 718.1 1054.4 727.3 1054.4 730.0" fill="none" stroke="#f6e48a" stroke-width="2.8" stroke-linejoin="round" stroke-linecap="round"/>
<path d="M1248.6 985.4 C1252.6 982.5 1266.2 970.7 1272.4 968.3 C1278.6 965.9 1282.3 968.1 1285.6 971.0 C1288.9 973.9 1291.1 979.9 1292.2 985.4 C1293.3 990.9 1290.0 998.8 1292.2 1003.9 C1294.4 1009.0 1304.3 1012.7 1305.4 1015.8 C1306.5 1018.9 1302.1 1019.5 1298.8 1022.4 C1295.5 1025.3 1285.6 1029.3 1285.6 1033.0 C1285.6 1036.7 1296.1 1041.1 1298.8 1044.8 C1301.5 1048.5 1302.4 1052.1 1301.5 1055.4 C1300.6 1058.7 1298.3 1063.5 1293.5 1064.6 C1288.7 1065.7 1277.7 1063.8 1272.4 1062.0 C1267.1 1060.2 1267.3 1054.7 1261.8 1054.0 C1256.3 1053.3 1239.8 1060.6 1239.4 1058.0 C1239.0 1055.4 1252.6 1044.1 1259.2 1038.2 C1265.8 1032.3 1273.9 1026.8 1279.0 1022.4 C1284.1 1018.0 1288.2 1013.7 1290.0 1012.0" fill="none" stroke="#bdbbb0" stroke-width="1.5" stroke-dasharray="1.6 1.1"/>
<path d="M1265.8 985.4 C1266.9 988.3 1269.1 1000.6 1272.4 1002.6 C1275.7 1004.6 1283.4 998.2 1285.6 997.3" fill="none" stroke="#bdbbb0" stroke-width="1.5" stroke-dasharray="1.6 1.1"/>
<path d="M1180.0 978.8 C1191.0 980.1 1230.6 983.5 1246.0 986.8 C1261.4 990.1 1265.8 996.9 1272.4 998.6 C1279.0 1000.4 1283.4 997.5 1285.6 997.3" fill="none" stroke="#bdbbb0" stroke-width="1.5" stroke-dasharray="1.6 1.1"/>
<path d="M1225.0 680.0 C1227.8 680.8 1235.3 680.7 1241.8 684.6 C1248.3 688.5 1256.2 699.5 1264.2 703.3 C1272.2 707.1 1282.7 704.5 1290.0 707.6 C1297.3 710.7 1305.0 719.6 1308.0 722.0" fill="none" stroke="#bdbbb0" stroke-width="1.5" stroke-dasharray="1.6 1.1"/>
<path d="M1845.1 779.5 C1846.2 777.9 1848.2 770.8 1851.6 769.7 C1854.9 768.6 1861.3 773.2 1865.2 772.9 C1869.1 772.6 1870.9 768.8 1875.0 768.0 C1879.1 767.2 1885.9 766.8 1889.7 768.0 C1893.5 769.2 1899.9 771.6 1897.8 775.1 C1895.7 778.6 1885.3 787.8 1877.2 789.2 C1869.1 790.7 1854.2 785.4 1848.9 783.8 C1843.6 782.2 1845.7 780.2 1845.1 779.5" fill="none" stroke="#bdbbb0" stroke-width="1.5" stroke-dasharray="1.6 1.1"/>
<path d="M1851.0 776.0 L1886.0 782.0" fill="none" stroke="#bdbbb0" stroke-width="1.5" stroke-dasharray="1.6 1.1"/>
<path d="M1860.0 772.0 L1857.0 786.0" fill="none" stroke="#bdbbb0" stroke-width="1.5" stroke-dasharray="1.6 1.1"/>
<path d="M1868.0 774.0 L1865.0 787.0" fill="none" stroke="#bdbbb0" stroke-width="1.5" stroke-dasharray="1.6 1.1"/>
<path d="M1876.0 776.0 L1873.0 788.0" fill="none" stroke="#bdbbb0" stroke-width="1.5" stroke-dasharray="1.6 1.1"/>
<path d="M1894.6 747.9 C1895.1 749.5 1899.2 755.2 1897.8 757.7 C1896.3 760.2 1887.9 761.1 1885.9 762.6 C1883.9 764.1 1885.9 766.3 1885.9 767.0" fill="none" stroke="#bdbbb0" stroke-width="1.5" stroke-dasharray="1.6 1.1"/>
<path d="M1897.8 774.6 L1876.0 800.0" fill="none" stroke="#bdbbb0" stroke-width="1.5" stroke-dasharray="1.6 1.1"/>
<path d="M471.8 359.1 C481.2 362.5 512.9 376.3 528.1 379.7 C543.3 383.1 554.7 378.9 563.1 379.7 C571.5 380.5 568.9 378.8 578.6 384.4 C588.3 390.0 609.0 407.4 621.3 413.5 C633.6 419.6 636.2 412.1 652.4 421.2 C668.6 430.2 700.9 458.7 718.4 467.8 C735.9 476.9 744.2 470.4 757.2 475.6 C770.2 480.8 774.7 490.8 796.1 498.9 C817.5 507.0 860.8 515.4 885.4 524.1 C910.0 532.8 927.4 541.6 943.6 551.3 C959.8 561.0 973.0 574.9 982.4 582.4 C991.8 589.9 996.0 590.8 999.9 596.0 C1003.8 601.2 1005.4 606.1 1005.7 613.5 C1006.0 620.9 1000.5 631.6 1001.8 640.6 C1003.1 649.6 1007.7 659.4 1013.5 667.8 C1019.3 676.2 1032.9 687.2 1036.8 691.1" fill="none" stroke="#bdbbb0" stroke-width="1.5" stroke-dasharray="1.6 1.1"/>
<path d="M999.8 594.8 C1008.3 594.0 1038.7 591.8 1050.7 589.8 C1062.7 587.8 1066.2 584.1 1071.8 583.0 C1077.4 581.9 1082.1 583.0 1084.2 583.0" fill="none" stroke="#bdbbb0" stroke-width="1.5" stroke-dasharray="1.6 1.1"/>
<path d="M1039.5 560.0 C1041.4 565.0 1043.2 581.5 1050.7 589.8 C1058.2 598.1 1078.6 606.4 1084.2 609.7" fill="none" stroke="#bdbbb0" stroke-width="1.5" stroke-dasharray="1.6 1.1"/>
<path d="M1050.7 589.8 C1052.2 587.9 1057.1 582.3 1059.4 578.6 C1061.7 574.9 1063.5 569.4 1064.3 567.5" fill="none" stroke="#bdbbb0" stroke-width="1.5" stroke-dasharray="1.6 1.1"/>
<path d="M1051.9 689.2 C1054.6 689.6 1062.6 689.8 1068.0 691.7 C1073.4 693.6 1081.5 699.0 1084.2 700.4" fill="none" stroke="#bdbbb0" stroke-width="1.5" stroke-dasharray="1.6 1.1"/>
<path d="M450.5 771.9 C457.0 773.3 474.4 775.4 489.3 780.4 C504.2 785.4 515.8 795.6 539.8 801.8 C563.8 807.9 609.7 814.5 633.0 817.3 C656.3 820.1 660.2 821.1 679.6 818.5 C699.0 815.9 710.7 811.7 749.5 801.8 C788.3 791.9 877.6 774.0 912.5 759.1 C947.4 744.2 941.0 720.3 959.1 712.5 C977.2 704.7 1008.3 714.1 1021.3 712.5 C1034.2 710.9 1034.2 704.4 1036.8 702.8" fill="none" stroke="#bdbbb0" stroke-width="1.5" stroke-dasharray="1.6 1.1"/>
<path d="M767.7 1110.2 C777.2 1105.3 809.3 1090.5 825.0 1080.6 C840.7 1070.7 845.4 1070.1 862.0 1051.0 C878.6 1031.9 904.5 989.5 924.8 966.1 C945.1 942.7 963.0 933.4 983.9 910.6 C1004.8 887.8 1033.7 859.4 1050.0 829.3 C1066.3 799.2 1073.2 751.5 1081.5 730.0 C1089.8 708.5 1088.7 713.9 1100.0 700.0 C1111.3 686.1 1130.8 660.6 1149.1 646.7 C1167.4 632.8 1195.7 624.6 1209.7 616.4 C1223.7 608.2 1221.3 603.5 1233.0 597.7 C1244.7 591.9 1266.4 585.3 1279.6 581.4 C1292.8 577.5 1303.8 574.4 1312.2 574.4 C1320.6 574.4 1318.9 580.9 1330.0 581.1 C1341.1 581.3 1364.9 575.9 1378.9 575.7 C1392.9 575.5 1388.8 573.4 1414.2 579.7 C1439.6 586.0 1505.3 606.0 1531.1 613.7 C1556.9 621.4 1535.9 616.4 1569.1 625.9 C1602.2 635.4 1699.2 661.8 1730.0 670.8 C1760.8 679.8 1742.2 675.6 1753.9 680.0 C1765.6 684.4 1776.4 684.5 1800.2 697.3 C1824.0 710.1 1880.5 747.0 1896.5 757.0" fill="none" stroke="#bdbbb0" stroke-width="1.5" stroke-dasharray="1.6 1.1"/>
<path d="M880.4 1023.4 C881.6 1024.3 886.6 1021.2 887.8 1028.9 C889.0 1036.6 885.3 1058.7 887.8 1069.5 C890.3 1080.3 900.1 1089.6 902.6 1093.6" fill="none" stroke="#bdbbb0" stroke-width="1.5" stroke-dasharray="1.6 1.1"/>
<path d="M1006.0 851.5 L1050.0 799.8" fill="none" stroke="#bdbbb0" stroke-width="1.5" stroke-dasharray="1.6 1.1"/>
<path d="M529.8 177.2 C529.3 178.9 526.3 182.6 526.8 187.5 C527.3 192.4 528.3 202.8 532.7 206.7 C537.1 210.6 545.5 208.6 553.4 211.1 C561.3 213.6 575.0 218.7 579.9 221.4 C584.8 224.1 578.5 225.3 582.9 227.3 C587.3 229.3 601.6 231.0 606.5 233.2 C611.4 235.4 609.4 240.1 612.4 240.6 C615.4 241.1 621.2 235.0 624.2 236.2 C627.2 237.4 627.2 244.1 630.1 248.0 C633.0 251.9 637.5 257.1 641.9 259.8 C646.3 262.5 652.2 264.2 656.6 264.2 C661.0 264.2 667.9 262.5 668.4 259.8 C668.9 257.1 660.1 251.4 659.6 248.0 C659.1 244.6 661.6 241.6 665.5 239.1 C669.4 236.6 673.4 234.4 683.2 233.2 C693.0 232.0 707.8 230.3 724.5 231.8 C741.2 233.3 766.3 238.4 783.5 242.1 C800.7 245.8 814.9 252.7 827.7 253.9 C840.5 255.1 847.9 249.0 860.2 249.5 C872.5 250.0 891.7 254.1 901.5 256.8 C911.3 259.5 912.3 262.8 919.2 265.7 C926.1 268.6 940.3 271.6 942.8 274.5 C945.2 277.4 932.9 279.9 933.9 283.4 C934.9 286.8 943.3 291.8 948.7 295.2 C954.1 298.6 962.0 303.5 966.4 304.0 C970.8 304.5 969.6 298.8 975.2 298.1 C980.8 297.4 993.2 301.1 1000.0 299.6 C1006.8 298.1 1009.2 290.4 1015.7 289.3 C1022.2 288.2 1033.4 291.2 1039.3 293.2 C1045.2 295.2 1046.4 298.1 1051.0 301.5 C1055.6 304.9 1061.2 310.3 1066.9 313.9 C1072.6 317.5 1080.8 319.6 1085.0 323.0 C1089.2 326.4 1085.8 331.5 1091.8 334.3 C1097.8 337.1 1115.2 336.5 1121.2 339.9 C1127.2 343.3 1125.0 351.2 1128.0 354.6 C1131.0 358.0 1135.5 360.7 1139.3 360.3 C1143.1 359.9 1146.5 356.0 1150.6 352.4 C1154.7 348.8 1161.1 339.9 1164.1 338.8 C1167.1 337.7 1169.5 340.0 1168.7 345.6 C1168.0 351.2 1161.5 365.2 1159.6 372.7 C1157.7 380.2 1159.7 385.5 1157.4 390.8 C1155.1 396.1 1146.8 400.2 1146.0 404.4 C1145.2 408.5 1147.9 412.9 1152.8 415.7 C1157.7 418.5 1168.6 423.2 1175.4 421.3 C1182.2 419.4 1190.1 411.4 1193.5 404.4 C1196.9 397.4 1193.5 387.8 1195.8 379.5 C1198.1 371.2 1201.4 358.0 1207.1 354.6 C1212.8 351.2 1221.8 360.3 1229.7 359.2 C1237.6 358.1 1251.9 354.2 1254.6 347.8 C1257.2 341.4 1249.8 327.5 1245.6 320.7 C1241.4 313.9 1229.0 312.6 1229.7 307.1 C1230.5 301.6 1246.7 291.1 1250.1 287.9" fill="none" stroke="#bdbbb0" stroke-width="1.5" stroke-dasharray="1.6 1.1"/>
<path d="M997.9 336.5 C1002.2 337.1 1017.9 338.4 1023.9 339.9 C1029.9 341.4 1032.2 342.4 1034.1 345.6 C1036.0 348.8 1033.5 355.2 1035.2 359.2 C1036.9 363.1 1042.6 363.6 1044.3 369.3 C1046.0 375.0 1045.0 381.6 1045.4 393.1 C1045.8 404.6 1044.4 427.0 1046.5 438.3 C1048.6 449.6 1054.3 454.5 1057.8 460.9 C1061.3 467.3 1060.9 468.6 1067.6 476.6 C1074.3 484.7 1088.9 503.0 1097.8 509.2 C1106.7 515.4 1117.2 513.1 1121.1 513.9" fill="none" stroke="#bdbbb0" stroke-width="1.5" stroke-dasharray="1.6 1.1"/>
<path d="M1112.1 500.0 C1120.8 495.0 1155.0 481.0 1164.1 470.0 C1173.1 459.0 1163.0 442.9 1166.4 433.8 C1169.8 424.8 1179.6 421.4 1184.5 415.7 C1189.4 410.0 1195.4 406.7 1195.8 399.9 C1196.2 393.1 1184.9 382.6 1186.8 375.0 C1188.7 367.4 1203.7 358.0 1207.1 354.6" fill="none" stroke="#bdbbb0" stroke-width="1.5" stroke-dasharray="1.6 1.1"/>
<path d="M1164.1 470.0 C1169.8 468.3 1189.4 460.9 1198.1 459.8 C1206.8 458.7 1211.3 460.0 1216.2 463.2 C1221.1 466.4 1224.5 472.9 1227.5 479.0 C1230.5 485.1 1233.1 496.5 1234.2 500.0" fill="none" stroke="#bdbbb0" stroke-width="1.5" stroke-dasharray="1.6 1.1"/>
<path d="M1213.3 378.0 C1216.7 379.2 1227.6 382.2 1233.5 385.1 C1239.4 388.0 1244.7 391.5 1248.6 395.2 C1252.5 398.9 1256.0 403.6 1256.7 407.3 C1257.4 411.0 1254.1 414.5 1252.7 417.4 C1251.3 420.3 1247.3 421.6 1248.6 424.5 C1249.9 427.4 1257.0 432.8 1260.7 434.6 C1264.4 436.5 1268.3 437.0 1270.8 435.6 C1273.3 434.2 1275.1 431.2 1275.9 426.5 C1276.8 421.8 1275.1 411.7 1275.9 407.3 C1276.7 402.9 1279.4 401.8 1280.9 400.3 C1282.4 398.8 1282.3 400.0 1285.0 398.3 C1287.7 396.6 1293.5 392.2 1297.0 390.0 C1300.5 387.8 1303.8 386.5 1306.1 385.1 C1308.4 383.7 1310.3 382.4 1311.1 381.8" fill="none" stroke="#bdbbb0" stroke-width="1.5" stroke-dasharray="1.6 1.1"/>
<path d="M1180.0 375.0 C1182.2 375.2 1187.5 375.5 1193.1 376.0 C1198.6 376.5 1204.5 377.3 1213.3 378.0 C1222.0 378.7 1240.2 379.8 1245.6 380.1" fill="none" stroke="#bdbbb0" stroke-width="1.5" stroke-dasharray="1.6 1.1"/>
<path d="M1311.2 381.1 C1311.9 383.6 1313.9 392.3 1315.2 396.2 C1316.5 400.1 1317.6 402.3 1319.3 404.3 C1321.0 406.3 1324.5 406.6 1325.3 408.3 C1326.1 410.0 1325.0 411.7 1324.3 414.4 C1323.6 417.1 1323.0 420.5 1321.3 424.5 C1319.6 428.5 1315.5 434.2 1314.2 438.6 C1312.9 443.0 1312.9 447.8 1313.2 450.7 C1313.5 453.6 1313.9 453.1 1316.2 455.8 C1318.5 458.5 1324.2 464.5 1327.3 466.9 C1330.4 469.3 1333.7 469.5 1335.0 470.0" fill="none" stroke="#bdbbb0" stroke-width="1.5" stroke-dasharray="1.6 1.1"/>
<path d="M1314.2 412.4 L1321.3 414.4" fill="none" stroke="#bdbbb0" stroke-width="1.5" stroke-dasharray="1.6 1.1"/>
<path d="M1316.0 420.0 C1315.2 424.4 1312.9 441.6 1311.2 446.7 C1309.5 451.8 1306.8 448.1 1306.1 450.7 C1305.4 453.2 1305.6 458.8 1307.0 462.0 C1308.4 465.2 1314.4 467.6 1314.5 470.0 C1314.6 472.4 1308.7 475.5 1307.5 476.6" fill="none" stroke="#bdbbb0" stroke-width="1.5" stroke-dasharray="1.6 1.1"/>
<path d="M1320.2 454.1 L1330.0 452.0" fill="none" stroke="#bdbbb0" stroke-width="1.5" stroke-dasharray="1.6 1.1"/>
<path d="M1367.7 309.4 C1381.4 309.0 1427.4 306.2 1450.0 307.1 C1472.6 308.0 1490.6 311.6 1503.4 314.9 C1516.2 318.2 1515.8 324.4 1527.0 326.7 C1538.2 329.0 1559.8 325.7 1570.3 328.6 C1580.8 331.6 1582.8 338.8 1590.0 344.4 C1597.2 350.0 1598.5 362.2 1613.6 362.0 C1628.7 361.8 1659.3 347.7 1680.6 343.4 C1701.9 339.1 1731.0 338.5 1741.6 336.4 C1752.1 334.2 1749.0 332.9 1743.9 330.5 C1738.8 328.1 1721.4 325.6 1711.1 322.3 C1700.8 319.0 1686.5 313.7 1681.8 310.6 C1677.1 307.5 1680.0 304.9 1682.9 303.5 C1685.8 302.1 1695.8 304.7 1699.3 302.4 C1702.8 300.1 1702.0 294.0 1704.0 289.5 C1706.0 285.0 1710.1 279.7 1711.1 275.4 C1712.1 271.1 1714.6 266.4 1709.9 263.7 C1705.2 261.0 1690.1 261.6 1682.9 259.0 C1675.7 256.4 1669.6 251.1 1666.5 248.4 C1663.4 245.7 1671.8 245.1 1664.2 242.6 C1656.6 240.1 1627.5 235.2 1620.8 233.2 C1614.1 231.2 1625.3 233.5 1624.3 230.8 C1623.3 228.1 1623.1 222.7 1614.9 216.8 C1606.7 211.0 1581.5 200.6 1575.0 195.7 C1568.5 190.8 1582.6 190.4 1576.2 187.5 C1569.8 184.6 1543.0 179.7 1536.4 178.1" fill="none" stroke="#bdbbb0" stroke-width="1.5" stroke-dasharray="1.6 1.1"/>
<path d="M1367.7 309.4 C1365.8 312.0 1358.0 319.3 1356.4 325.2 C1354.8 331.1 1356.1 340.1 1358.0 345.0 C1359.9 349.9 1361.9 347.7 1367.7 354.6 C1373.5 361.5 1389.2 378.4 1392.6 386.3 C1396.0 394.2 1385.8 400.6 1388.0 402.1 C1390.2 403.6 1402.3 399.8 1406.1 395.3 C1409.9 390.8 1403.3 380.3 1410.6 375.0 C1417.9 369.7 1437.2 364.2 1450.0 363.7 C1462.8 363.2 1476.2 371.5 1487.7 371.9 C1499.2 372.3 1512.7 370.3 1519.2 366.0 C1525.8 361.7 1523.7 348.3 1527.0 346.3 C1530.3 344.3 1524.4 351.6 1538.8 354.2 C1553.2 356.8 1601.1 360.7 1613.6 362.0" fill="none" stroke="#bdbbb0" stroke-width="1.5" stroke-dasharray="1.6 1.1"/>
<path d="M1330.0 452.0 C1339.0 451.1 1370.3 448.9 1384.3 446.6 C1398.3 444.3 1405.1 437.5 1414.2 438.4 C1423.3 439.3 1429.6 443.2 1438.7 452.0 C1447.8 460.8 1463.4 478.5 1468.6 491.4 C1473.8 504.3 1473.2 513.9 1470.0 529.5 C1466.8 545.1 1453.0 575.9 1449.6 585.2" fill="none" stroke="#bdbbb0" stroke-width="1.5" stroke-dasharray="1.6 1.1"/>
<path d="M1384.3 448.0 C1383.4 450.2 1378.9 457.7 1378.9 461.5 C1378.9 465.3 1383.4 469.4 1384.3 471.0" fill="none" stroke="#bdbbb0" stroke-width="1.5" stroke-dasharray="1.6 1.1"/>
<path d="M1472.7 528.1 C1475.4 523.4 1482.9 504.1 1489.0 499.6 C1495.1 495.1 1502.3 498.2 1509.3 500.9 C1516.3 503.6 1527.7 508.9 1531.1 515.9 C1534.5 522.9 1526.5 534.4 1529.7 543.0 C1532.9 551.6 1549.6 556.0 1550.1 567.5 C1550.5 579.0 1535.4 604.8 1532.4 612.3" fill="none" stroke="#bdbbb0" stroke-width="1.5" stroke-dasharray="1.6 1.1"/>
<path d="M1495.8 496.8 C1496.2 494.8 1493.5 486.0 1498.5 484.6 C1503.5 483.2 1521.2 488.0 1525.7 488.7" fill="none" stroke="#bdbbb0" stroke-width="1.5" stroke-dasharray="1.6 1.1"/>
<path d="M1618.0 475.1 C1617.1 484.2 1612.4 519.3 1612.6 529.5 C1612.8 539.7 1619.9 530.4 1619.4 536.3 C1619.0 542.2 1608.3 556.2 1609.9 564.8 C1611.5 573.4 1625.7 584.0 1628.9 587.9" fill="none" stroke="#bdbbb0" stroke-width="1.5" stroke-dasharray="1.6 1.1"/>
<path d="M1609.9 575.7 C1606.7 577.5 1595.9 578.8 1590.9 586.5 C1585.9 594.2 1581.8 615.9 1580.0 621.8" fill="none" stroke="#bdbbb0" stroke-width="1.5" stroke-dasharray="1.6 1.1"/>
<path d="M1569.1 627.3 C1569.1 628.9 1563.2 629.3 1569.1 636.8 C1575.0 644.3 1592.7 666.4 1604.5 672.1 C1616.3 677.8 1631.6 669.7 1639.8 670.8 C1648.0 671.9 1651.1 677.5 1653.4 678.9" fill="none" stroke="#bdbbb0" stroke-width="1.5" stroke-dasharray="1.6 1.1"/>
<path d="M1639.8 526.7 C1640.7 531.2 1642.5 547.1 1645.2 553.9 C1647.9 560.7 1649.8 562.1 1656.1 567.5 C1662.4 572.9 1673.4 580.2 1683.3 586.5 C1693.2 592.8 1705.8 600.1 1715.2 605.0 C1724.6 609.9 1728.5 610.3 1739.4 616.1 C1750.3 621.9 1770.5 635.0 1780.4 640.0 C1790.3 645.0 1793.8 649.1 1799.0 646.0 C1804.2 642.9 1809.3 625.2 1811.4 621.1" fill="none" stroke="#bdbbb0" stroke-width="1.5" stroke-dasharray="1.6 1.1"/>
<path d="M1715.2 577.0 L1724.5 601.2" fill="none" stroke="#bdbbb0" stroke-width="1.5" stroke-dasharray="1.6 1.1"/>
<path d="M1799.0 646.0 L1814.0 685.7" fill="none" stroke="#bdbbb0" stroke-width="1.5" stroke-dasharray="1.6 1.1"/>
<path d="M1801.5 644.7 C1807.7 645.3 1831.3 647.4 1838.8 648.4 C1846.2 649.4 1842.9 643.1 1846.2 651.0 C1849.5 658.9 1856.5 688.2 1858.6 695.7" fill="none" stroke="#bdbbb0" stroke-width="1.5" stroke-dasharray="1.6 1.1"/>
<path d="M1863.6 690.7 C1865.5 691.1 1870.7 690.7 1874.8 693.2 C1878.9 695.7 1886.1 703.5 1888.4 705.6" fill="none" stroke="#bdbbb0" stroke-width="1.5" stroke-dasharray="1.6 1.1"/>
<path d="M1821.4 496.0 C1823.9 500.5 1833.2 515.4 1836.3 523.0 C1839.4 530.6 1836.3 536.6 1840.0 541.6 C1843.7 546.6 1855.0 548.4 1858.7 552.8 C1862.4 557.1 1864.3 560.6 1862.4 567.7 C1860.5 574.8 1853.7 586.3 1847.5 595.6 C1841.3 604.9 1829.7 616.2 1825.1 623.6 C1820.5 631.0 1821.0 634.6 1820.0 640.0 C1819.0 645.4 1819.1 653.2 1818.9 655.9" fill="none" stroke="#bdbbb0" stroke-width="1.5" stroke-dasharray="1.6 1.1"/>
<path d="M1819.6 543.5 L1814.0 640.0" fill="none" stroke="#bdbbb0" stroke-width="1.5" stroke-dasharray="1.6 1.1"/>
<path d="M1819.6 555.6 C1824.7 556.4 1844.9 558.1 1850.3 560.2 C1855.7 562.3 1851.7 566.7 1852.0 568.0" fill="none" stroke="#bdbbb0" stroke-width="1.5" stroke-dasharray="1.6 1.1"/>
<path d="M1819.6 565.8 L1894.1 578.9" fill="none" stroke="#bdbbb0" stroke-width="1.5" stroke-dasharray="1.6 1.1"/>
<path d="M1851.2 482.0 C1858.0 485.1 1884.1 494.4 1892.2 500.6 C1900.3 506.8 1899.1 511.8 1899.7 519.2 C1900.3 526.7 1895.9 535.3 1895.9 545.3 C1895.9 555.2 1900.3 571.8 1899.7 578.9 C1899.1 586.0 1899.7 578.0 1892.2 588.2 C1884.8 598.4 1862.7 629.5 1855.0 640.0 C1847.3 650.5 1847.7 649.2 1846.2 651.0" fill="none" stroke="#bdbbb0" stroke-width="1.5" stroke-dasharray="1.6 1.1"/>
<path d="M1700.3 485.7 C1699.4 483.2 1693.8 475.1 1694.7 470.8 C1695.6 466.5 1700.9 462.4 1705.9 459.6 C1710.9 456.8 1720.8 456.2 1724.5 454.0 C1728.2 451.8 1723.3 446.6 1728.3 446.6 C1733.3 446.6 1744.4 453.7 1754.3 454.0 C1764.2 454.3 1781.7 449.0 1787.9 448.4 C1794.1 447.8 1786.6 447.8 1791.6 450.3 C1796.6 452.8 1807.1 458.4 1817.7 463.4 C1828.3 468.4 1848.2 476.4 1855.0 480.1 C1861.8 483.8 1855.6 486.0 1858.7 485.7 C1861.8 485.4 1866.6 481.9 1873.6 478.3 C1880.6 474.7 1896.1 466.6 1900.6 464.3" fill="none" stroke="#bdbbb0" stroke-width="1.5" stroke-dasharray="1.6 1.1"/>
<path d="M1787.9 429.8 L1787.9 448.4" fill="none" stroke="#bdbbb0" stroke-width="1.5" stroke-dasharray="1.6 1.1"/>
<path d="M1851.2 450.3 L1897.8 443.8" fill="none" stroke="#bdbbb0" stroke-width="1.5" stroke-dasharray="1.6 1.1"/>
<path d="M1330.0 573.5 C1336.8 573.0 1362.6 569.4 1370.8 570.2 C1379.0 571.0 1381.2 573.9 1378.9 578.4 C1376.6 582.9 1361.3 592.0 1357.2 597.4 C1353.1 602.8 1350.9 601.0 1354.5 611.0 C1358.1 621.0 1369.1 642.4 1378.9 657.2 C1388.7 672.0 1403.9 689.3 1413.4 700.0 C1422.9 710.7 1431.1 716.7 1436.0 721.6 C1440.9 726.5 1432.7 722.6 1443.0 729.5 C1453.3 736.4 1482.9 753.2 1498.0 763.0 C1513.1 772.8 1534.9 781.3 1533.4 788.5 C1531.9 795.7 1504.8 799.7 1489.1 806.2 C1473.4 812.8 1447.0 822.5 1439.0 827.8 C1431.0 833.0 1440.2 834.1 1441.0 837.7 C1441.8 841.3 1443.5 847.5 1444.0 849.5" fill="none" stroke="#bdbbb0" stroke-width="1.5" stroke-dasharray="1.6 1.1"/>
<path d="M1436.0 723.6 C1431.6 728.2 1412.3 743.2 1409.5 751.1 C1406.7 759.0 1413.7 765.2 1419.3 770.8 C1424.9 776.4 1439.0 782.3 1443.0 784.6" fill="none" stroke="#bdbbb0" stroke-width="1.5" stroke-dasharray="1.6 1.1"/>
<path d="M1380.0 855.4 C1386.5 852.1 1409.5 838.0 1419.3 835.7 C1429.1 833.4 1435.7 840.6 1439.0 841.6" fill="none" stroke="#bdbbb0" stroke-width="1.5" stroke-dasharray="1.6 1.1"/>
<path d="M1441.0 829.8 C1448.9 829.6 1481.3 825.5 1488.2 828.8 C1495.1 832.1 1486.7 843.4 1482.3 849.5 C1477.9 855.6 1464.5 860.0 1461.6 865.2 C1458.6 870.4 1459.0 873.2 1464.6 880.9 C1470.1 888.6 1484.1 898.9 1494.9 911.4 C1505.7 923.9 1528.5 933.6 1529.3 955.7 C1530.1 977.8 1503.9 1023.6 1499.8 1044.1 C1495.7 1064.6 1511.2 1070.4 1504.7 1078.6 C1498.2 1086.8 1479.3 1099.9 1460.5 1093.3 C1441.7 1086.7 1406.3 1046.6 1391.6 1039.2 C1376.8 1031.8 1382.7 1045.4 1372.0 1049.1 C1361.3 1052.8 1344.1 1059.0 1327.7 1061.4 C1311.3 1063.9 1288.3 1065.0 1273.6 1063.8 C1258.8 1062.6 1244.9 1055.6 1239.2 1054.0" fill="none" stroke="#bdbbb0" stroke-width="1.5" stroke-dasharray="1.6 1.1"/>
<path d="M1682.9 769.8 C1687.0 771.4 1698.8 779.3 1707.4 779.6 C1716.0 779.9 1720.5 778.7 1734.7 771.7 C1748.9 764.7 1780.2 746.7 1792.4 737.8 C1804.6 728.9 1803.4 723.6 1807.9 718.5 C1812.4 713.4 1817.5 708.9 1819.4 707.0" fill="none" stroke="#bdbbb0" stroke-width="1.5" stroke-dasharray="1.6 1.1"/>
<path d="M1700.0 1096.0 C1703.8 1091.5 1714.1 1079.9 1723.1 1069.0 C1732.1 1058.1 1738.5 1052.6 1753.9 1030.5 C1769.3 1008.4 1798.6 963.8 1815.6 936.2 C1832.6 908.6 1849.0 882.2 1856.0 864.9 C1863.0 847.6 1855.7 841.8 1857.9 832.2 C1860.2 822.6 1863.1 816.7 1869.5 807.1 C1875.9 797.5 1892.0 779.9 1896.5 774.4" fill="none" stroke="#bdbbb0" stroke-width="1.5" stroke-dasharray="1.6 1.1"/>
<path d="M1612.9 1105.6 C1620.3 1103.5 1644.0 1094.9 1657.1 1093.3 C1670.2 1091.7 1684.3 1095.3 1691.5 1095.8 C1698.7 1096.2 1698.6 1096.0 1700.0 1096.0" fill="none" stroke="#bdbbb0" stroke-width="1.5" stroke-dasharray="1.6 1.1"/>
<path d="M1798.2 697.3 C1808.8 696.7 1849.0 694.1 1861.8 693.5 C1874.6 692.9 1870.8 691.6 1875.3 693.5 C1879.8 695.4 1886.5 703.1 1888.8 705.0" fill="none" stroke="#bdbbb0" stroke-width="1.5" stroke-dasharray="1.6 1.1"/>
<path d="M1320.4 862.2 C1327.4 868.4 1353.1 899.1 1362.1 899.1 C1371.1 899.1 1376.9 867.5 1374.4 862.2 C1372.0 856.9 1351.9 866.4 1347.4 867.2" fill="none" stroke="#bdbbb0" stroke-width="1.5" stroke-dasharray="1.6 1.1"/>
<path d="M1374.4 862.2 C1381.4 857.3 1405.4 836.1 1416.2 832.7 C1427.0 829.3 1435.2 840.1 1439.0 841.6" fill="none" stroke="#bdbbb0" stroke-width="1.5" stroke-dasharray="1.6 1.1"/>
<path d="M1362.1 901.6 C1350.6 915.5 1305.6 967.0 1293.3 985.1 C1281.0 1003.2 1289.2 1005.9 1288.4 1010.0" fill="none" stroke="#bdbbb0" stroke-width="1.5" stroke-dasharray="1.6 1.1"/>
<path d="M1086.8 830.3 C1087.6 837.7 1090.9 863.4 1091.7 874.5 C1092.5 885.6 1093.7 884.1 1091.7 896.7 C1089.8 909.3 1084.1 934.5 1080.0 950.0 C1075.9 965.5 1069.3 980.0 1067.2 990.0 C1065.1 1000.0 1064.8 1004.8 1067.2 1009.7 C1069.7 1014.6 1077.8 1022.1 1081.9 1019.6 C1086.0 1017.1 1089.7 999.1 1091.7 995.0 C1093.8 990.9 1092.6 1000.3 1094.2 995.0 C1095.8 989.7 1098.3 970.4 1101.6 963.0 C1104.9 955.6 1106.5 951.9 1113.9 950.7 C1121.4 949.5 1142.2 957.3 1146.3 955.7 C1150.4 954.1 1136.8 945.8 1138.4 940.9 C1140.0 936.0 1153.7 932.8 1155.7 926.2 C1157.8 919.7 1157.3 905.7 1150.7 901.6 C1144.1 897.5 1123.7 904.9 1116.3 901.6 C1108.9 898.3 1110.6 886.4 1106.5 881.9 C1102.4 877.4 1094.2 875.7 1091.7 874.5" fill="none" stroke="#bdbbb0" stroke-width="1.5" stroke-dasharray="1.6 1.1"/>
<path d="M1113.9 950.7 C1119.2 953.6 1135.6 963.1 1145.8 968.0 C1156.0 972.9 1159.7 977.4 1175.3 980.2 C1190.9 983.1 1222.8 983.1 1239.2 985.1 C1255.6 987.1 1264.6 987.6 1273.6 992.5 C1282.6 997.4 1293.3 1006.9 1293.3 1014.7 C1293.3 1022.5 1281.8 1031.8 1273.6 1039.2 C1265.4 1046.6 1249.0 1055.6 1244.1 1058.9" fill="none" stroke="#bdbbb0" stroke-width="1.5" stroke-dasharray="1.6 1.1"/>
<path d="M1254.0 968.0 C1259.7 968.4 1281.9 966.7 1288.4 970.4 C1295.0 974.1 1292.5 986.7 1293.3 990.0" fill="none" stroke="#bdbbb0" stroke-width="1.5" stroke-dasharray="1.6 1.1"/>
<path d="M1032.6 527.8 C1033.4 524.7 1031.5 517.7 1037.3 509.2 C1043.1 500.7 1062.5 482.0 1067.6 476.6" fill="none" stroke="#bdbbb0" stroke-width="1.5" stroke-dasharray="1.6 1.1"/>
<path d="M1030.3 532.5 C1029.1 540.3 1025.6 568.6 1023.3 579.1 C1021.0 589.6 1017.5 592.7 1016.3 595.4" fill="none" stroke="#bdbbb0" stroke-width="1.5" stroke-dasharray="1.6 1.1"/>
<path d="M1007.0 537.2 L1025.6 539.5" fill="none" stroke="#bdbbb0" stroke-width="1.5" stroke-dasharray="1.6 1.1"/>
<path d="M1000.0 713.0 C1004.7 712.0 1020.6 708.9 1028.0 707.2 C1035.4 705.5 1040.0 701.1 1044.3 702.6 C1048.6 704.1 1052.0 714.2 1053.6 716.5" fill="none" stroke="#bdbbb0" stroke-width="1.5" stroke-dasharray="1.6 1.1"/>
<path d="M1252.7 452.7 L1260.7 470.9" fill="none" stroke="#bdbbb0" stroke-width="1.5" stroke-dasharray="1.6 1.1"/>
<path d="M1358.8 488.2 C1359.6 491.3 1366.5 498.3 1363.4 506.9 C1360.3 515.4 1345.5 530.2 1340.1 539.5 C1334.7 548.8 1330.8 557.0 1330.8 562.8 C1330.8 568.6 1338.5 572.5 1340.1 574.4" fill="none" stroke="#bdbbb0" stroke-width="1.5" stroke-dasharray="1.6 1.1"/>
<path d="M1040.7 701.6 C1040.2 704.8 1038.7 714.3 1038.0 721.0 C1037.3 727.7 1035.6 738.1 1036.6 741.8 C1037.6 745.5 1042.7 743.0 1043.9 743.3" fill="none" stroke="#bdbbb0" stroke-width="1.5" stroke-dasharray="1.6 1.1"/>
<path d="M1052.0 704.1 C1052.4 705.7 1053.9 709.5 1054.3 713.8 C1054.7 718.1 1054.4 727.3 1054.4 730.0" fill="none" stroke="#bdbbb0" stroke-width="1.5" stroke-dasharray="1.6 1.1"/>
<text x="555.0" y="205.0" transform="rotate(22 555.0 205.0)" text-anchor="middle" dominant-baseline="central" font-size="13" fill="#000">Kruispad</text>
<text x="753.0" y="238.0" transform="rotate(8.6 753.0 238.0)" text-anchor="middle" dominant-baseline="central" font-size="13" fill="#000">Wolfkloof Hut to Glenstroom Hut</text>
<text x="1677.6" y="240.8" transform="rotate(27.6 1677.6 240.8)" text-anchor="middle" dominant-baseline="central" font-size="13" fill="#000">Glenstroom to Boskloof</text>
<text x="1495.5" y="309.0" transform="rotate(11.6 1495.5 309.0)" text-anchor="middle" dominant-baseline="central" font-size="13" fill="#000">Glenstroom to Boskloof</text>
<text x="1312.0" y="350.0" transform="rotate(-62.5 1312.0 350.0)" text-anchor="middle" dominant-baseline="central" font-size="13" fill="#000">Duivelsbos Waterfall</text>
<text x="1366.8" y="325.6" transform="rotate(-80.1 1366.8 325.6)" text-anchor="middle" dominant-baseline="central" font-size="13" fill="#000">Appelsbos Circle Trail</text>
<text x="1451.0" y="363.0" transform="rotate(-6.8 1451.0 363.0)" text-anchor="middle" dominant-baseline="central" font-size="13" fill="#000">Appelsblos Circle Trail</text>
<text x="1139.5" y="464.5" transform="rotate(-54.9 1139.5 464.5)" text-anchor="middle" dominant-baseline="central" font-size="13" fill="#000">Road to Marloth Nature Reserve</text>
<text x="1255.0" y="476.6" transform="rotate(-30.7 1255.0 476.6)" text-anchor="middle" dominant-baseline="central" font-size="13" fill="#000">Glen Barry Road</text>
<text x="1297.6" y="469.6" transform="rotate(-42.4 1297.6 469.6)" text-anchor="middle" dominant-baseline="central" font-size="13" fill="#000">Geelhout</text>
<text x="1328.0" y="488.0" transform="rotate(-13.7 1328.0 488.0)" text-anchor="middle" dominant-baseline="central" font-size="13" fill="#000">Kareelaan</text>
<text x="1211.0" y="517.4" transform="rotate(51.9 1211.0 517.4)" text-anchor="middle" dominant-baseline="central" font-size="13" fill="#000">Von Manger Street</text>
<text x="1169.5" y="512.0" transform="rotate(34.5 1169.5 512.0)" text-anchor="middle" dominant-baseline="central" font-size="13" fill="#000">Hout</text>
<text x="1185.0" y="549.0" transform="rotate(39.6 1185.0 549.0)" text-anchor="middle" dominant-baseline="central" font-size="13" fill="#000">Mitchell Whyte Street</text>
<text x="1250.0" y="533.6" transform="rotate(29.2 1250.0 533.6)" text-anchor="middle" dominant-baseline="central" font-size="13" fill="#000">Kamp</text>
<text x="1280.7" y="509.0" transform="rotate(-41.5 1280.7 509.0)" text-anchor="middle" dominant-baseline="central" font-size="13" fill="#000">Berg</text>
<text x="1214.3" y="550.0" transform="rotate(47 1214.3 550.0)" text-anchor="middle" dominant-baseline="central" font-size="13" fill="#000">Rhenius</text>
<text x="1337.0" y="554.6" transform="rotate(18.2 1337.0 554.6)" text-anchor="middle" dominant-baseline="central" font-size="13" fill="#000">Swellengrebel</text>
<text x="1151.4" y="562.8" transform="rotate(-78.8 1151.4 562.8)" text-anchor="middle" dominant-baseline="central" font-size="13" fill="#000">Van Dyk</text>
<text x="1281.4" y="568.0" transform="rotate(-19.3 1281.4 568.0)" text-anchor="middle" dominant-baseline="central" font-size="13" fill="#000">Geelhout</text>
<text x="1054.8" y="564.0" transform="rotate(59.7 1054.8 564.0)" text-anchor="middle" dominant-baseline="central" font-size="13" fill="#000">Bethel Street</text>
<text x="1106.0" y="573.3" transform="rotate(47.2 1106.0 573.3)" text-anchor="middle" dominant-baseline="central" font-size="13" fill="#000">Coldrey Street</text>
<text x="1180.5" y="579.0" transform="rotate(-42.2 1180.5 579.0)" text-anchor="middle" dominant-baseline="central" font-size="13" fill="#000">Bronn</text>
<text x="1117.7" y="620.0" transform="rotate(30 1117.7 620.0)" text-anchor="middle" dominant-baseline="central" font-size="13" fill="#000">Myburgh Street</text>
<text x="1109.0" y="630.3" transform="rotate(32.4 1109.0 630.3)" text-anchor="middle" dominant-baseline="central" font-size="13" fill="#000">Maynier Street</text>
<text x="1169.0" y="610.5" transform="rotate(45 1169.0 610.5)" text-anchor="middle" dominant-baseline="central" font-size="13" fill="#000">Murray</text>
<text x="1195.7" y="625.7" transform="rotate(-54.5 1195.7 625.7)" text-anchor="middle" dominant-baseline="central" font-size="13" fill="#000">Station Street</text>
<text x="1057.0" y="666.5" transform="rotate(-45 1057.0 666.5)" text-anchor="middle" dominant-baseline="central" font-size="13" fill="#000">Voortrek Street</text>
<text x="1164.3" y="671.0" transform="rotate(0 1164.3 671.0)" text-anchor="middle" dominant-baseline="central" font-size="13" fill="#000">Akasia</text>
<text x="1082.3" y="714.0" transform="rotate(-55.5 1082.3 714.0)" text-anchor="middle" dominant-baseline="central" font-size="13" fill="#000">Cooper Street</text>
<text x="1152.4" y="740.3" transform="rotate(-70.4 1152.4 740.3)" text-anchor="middle" dominant-baseline="central" font-size="13" fill="#000">Delphinium</text>
<text x="1181.9" y="760.3" transform="rotate(58.1 1181.9 760.3)" text-anchor="middle" dominant-baseline="central" font-size="13" fill="#000">Sonneblom</text>
<text x="1466.5" y="811.0" transform="rotate(-27.4 1466.5 811.0)" text-anchor="middle" dominant-baseline="central" font-size="13" fill="#000">Main Road</text>
<text x="1080.3" y="924.8" transform="rotate(-68.2 1080.3 924.8)" text-anchor="middle" dominant-baseline="central" font-size="13" fill="#000">Ou Tuin</text>
<text x="1182.7" y="972.0" transform="rotate(12.6 1182.7 972.0)" text-anchor="middle" dominant-baseline="central" font-size="13" fill="#000">Bushbuck Trail</text>
<text x="1264.0" y="968.0" transform="rotate(53 1264.0 968.0)" text-anchor="middle" dominant-baseline="central" font-size="13" fill="#000">Acacia Trail</text>
<text x="1236.7" y="1023.4" transform="rotate(19 1236.7 1023.4)" text-anchor="middle" dominant-baseline="central" font-size="13" fill="#000">Aloe Hill Trail</text>
<text x="1281.0" y="1052.7" transform="rotate(9.5 1281.0 1052.7)" text-anchor="middle" dominant-baseline="central" font-size="13" fill="#000">Track to viewpoint</text>
<circle cx="1181.9" cy="557.6" r="4" fill="#4a8a4a" stroke="#fff" stroke-width="1"/>
<circle cx="1208.4" cy="655.5" r="4" fill="#4a8a4a" stroke="#fff" stroke-width="1"/>
<text x="1213.6" y="659" font-size="10" fill="#fff" stroke="#777" stroke-width="2.2" paint-order="stroke">Railton</text>
<circle cx="1436.4" cy="724.6" r="4" fill="#4a8a4a" stroke="#fff" stroke-width="1"/>
<text x="1439" y="719.5" font-size="10" fill="#fff" stroke="#777" stroke-width="2.2" paint-order="stroke">Bontebok National Park Entrance Gate</text>
<circle cx="1444.5" cy="848.5" r="4" fill="#4a8a4a" stroke="#fff" stroke-width="1"/>
<text x="1447.8" y="843.5" font-size="10" fill="#fff" stroke="#777" stroke-width="2.2" paint-order="stroke">Bontebok National Park Reception &amp; Shop</text>
<circle cx="1291.8" cy="1015.1" r="4" fill="#4a8a4a" stroke="#fff" stroke-width="1"/>
<text x="1295.8" y="1011" font-size="10" fill="#fff" stroke="#777" stroke-width="2.2" paint-order="stroke">Lang Elsies Kraal Rest Camp</text>
<circle cx="1877.6" cy="752.4" r="4" fill="#4a8a4a" stroke="#fff" stroke-width="1"/>
<text x="1807.9" y="756" font-size="10" fill="#fff" stroke="#777" stroke-width="2.2" paint-order="stroke">Buffeljagsrivier</text>
</svg></div>
  <div id="status"></div>
  <div id="mapbot"></div>
</div>
<div class="hd" style="left:64.0px;top:61.8px"></div><div class="hd" style="left:67.5px;top:63.8px"></div><div class="hd" style="left:64.0px;top:65.8px"></div><div class="hd" style="left:67.5px;top:67.8px"></div><div class="hd" style="left:64.0px;top:69.8px"></div><div class="hd" style="left:67.5px;top:71.8px"></div><div class="hd" style="left:64.0px;top:73.8px"></div><div class="hd" style="left:67.5px;top:75.8px"></div><div class="hd" style="left:64.0px;top:77.8px"></div><div class="hd" style="left:67.5px;top:79.8px"></div><div class="hd" style="left:64.0px;top:81.8px"></div><div class="hd" style="left:67.5px;top:83.8px"></div>
<svg class="ic" style="left:73.5px;top:62.8px;opacity:1.0" width="24" height="24" viewBox="0 0 24 24"><path d="M5.5 2.5h9l4.5 4.5v15h-13.5z" fill="#fff" stroke="#555"/><path d="M14.5 2.5v4.5h4.5" fill="none" stroke="#555"/></svg>
<svg class="ic" style="left:111.8px;top:62.8px;opacity:1.0" width="24" height="24" viewBox="0 0 24 24"><path d="M2.5 5.5h6l1.5 2h9v3h-16.5z" fill="#f0c93a" stroke="#c9a028" stroke-width="0.8"/><path d="M4.5 9.5h18l-2.5 10h-17.5z" fill="#fcd955" stroke="#c9a028" stroke-width="0.8"/></svg>
<svg class="ic" style="left:150.0px;top:61.5px;opacity:1.0" width="24" height="24" viewBox="0 0 24 24"><rect x="3" y="2.5" width="18" height="19" rx="2" fill="#6494d2" stroke="#3f6ea8"/><rect x="6" y="3.5" width="12" height="8" fill="#f0f0f0"/><path d="M7.5 5.5h9M7.5 7.5h9M7.5 9.5h9" stroke="#555" stroke-width="0.8"/><rect x="7" y="14.5" width="10" height="6" fill="#ececec"/><rect x="8.2" y="15.5" width="2.2" height="4" fill="#2c4a80"/></svg>
<svg class="ic" style="left:188.4px;top:62.8px;opacity:1.0" width="24" height="24" viewBox="0 0 24 24"><rect x="3" y="2.5" width="18" height="19" rx="2" fill="#6494d2" stroke="#3f6ea8"/><rect x="6" y="3.5" width="12" height="8" fill="#f0f0f0"/><path d="M7.5 5.5h9M7.5 7.5h9M7.5 9.5h9" stroke="#555" stroke-width="0.8"/><rect x="7" y="14.5" width="10" height="6" fill="#ececec"/><rect x="8.2" y="15.5" width="2.2" height="4" fill="#2c4a80"/><rect x="13" y="13" width="10" height="10" rx="2" fill="#3f9a48" stroke="#2e7a36" stroke-width="0.8"/><path d="M15.5 20.5l5-5" stroke="#fff" stroke-width="1.8"/></svg>
<svg class="ic" style="left:225.5px;top:62.8px;opacity:1.0" width="24" height="24" viewBox="0 0 24 24"><path d="M2.5 4.5h14l3 3v11.5h-17z" fill="#fff" stroke="#666"/><rect x="13" y="13" width="10" height="10" rx="2" fill="#d9a820"/><path d="M18 14.5v7M14.5 18h7M15.5 15.5l5 5M20.5 15.5l-5 5" stroke="#fff" stroke-width="1"/></svg>
<svg class="ic" style="left:263.8px;top:62.8px;opacity:1.0" width="24" height="24" viewBox="0 0 24 24"><path d="M2.5 4.5h14l3 3v11.5h-17z" fill="#fff" stroke="#666"/><path d="M8 8a3 3 0 1 0 4 4l8 8" stroke="#333" stroke-width="2" fill="none"/><path d="M13 14l7 7" stroke="#e0b040" stroke-width="2.5"/></svg>
<div class="hd" style="left:300.0px;top:61.8px"></div><div class="hd" style="left:303.5px;top:63.8px"></div><div class="hd" style="left:300.0px;top:65.8px"></div><div class="hd" style="left:303.5px;top:67.8px"></div><div class="hd" style="left:300.0px;top:69.8px"></div><div class="hd" style="left:303.5px;top:71.8px"></div><div class="hd" style="left:300.0px;top:73.8px"></div><div class="hd" style="left:303.5px;top:75.8px"></div><div class="hd" style="left:300.0px;top:77.8px"></div><div class="hd" style="left:303.5px;top:79.8px"></div><div class="hd" style="left:300.0px;top:81.8px"></div><div class="hd" style="left:303.5px;top:83.8px"></div>
<svg class="ic" style="left:310.8px;top:62.8px;opacity:1.0" width="24" height="24" viewBox="0 0 24 24"><path d="M8 21c-2-2-5-6-6-8-.6-1.2.8-2.2 1.8-1.2l2.2 2.5V4.5c0-1.5 2-1.5 2 0v6.5V2.8c0-1.5 2.2-1.5 2.2 0v8.2V3.8c0-1.5 2.2-1.5 2.2 0v7.5V5.5c0-1.5 2.2-1.5 2.2 0v10c0 3-1 4.5-2.5 5.5z" fill="#fff" stroke="#111" stroke-width="1"/></svg>
<svg class="ic" style="left:347.9px;top:62.8px;opacity:1.0" width="24" height="24" viewBox="0 0 24 24"><rect x="2" y="2" width="12" height="11" fill="#f7e24a" stroke="#333" stroke-width="0.8" stroke-dasharray="1.5 1"/><path d="M12 1l3.5 4h-2v3h-3v-3h-2z M12 23l3.5-4h-2v-3h-3v3h-2z M1 12l4-3.5v2h3v3h-3v2z M23 12l-4-3.5v2h-3v3h3v2z" fill="#5e92cf" stroke="#3f6ea8" stroke-width="0.5"/></svg>
<svg class="ic" style="left:386.2px;top:62.8px;opacity:1.0" width="24" height="24" viewBox="0 0 24 24"><path d="M3 22 L9.5 15.5" stroke="#222" stroke-width="3.2" stroke-linecap="round"/><path d="M3.3 21.7 L8.6 16.4" stroke="#f2c830" stroke-width="2" stroke-linecap="round"/><circle cx="14.5" cy="9.5" r="7.3" fill="#f4f6f8" stroke="#777" stroke-width="1.3"/><path d="M14.5 5v9M10 9.5h9" stroke="#5a8fd0" stroke-width="2.2"/></svg>
<div style="position:absolute;left:420px;top:58px;width:34px;height:34px;background:linear-gradient(#a9a9a9,#c4c4c4 40%,#d2d2d2);border-left:1px solid #b0b0b0;border-right:1px solid #b8b8b8"></div>
<svg class="ic" style="left:424.6px;top:62.8px;opacity:1.0" width="24" height="24" viewBox="0 0 24 24"><path d="M3 22 L9.5 15.5" stroke="#222" stroke-width="3.2" stroke-linecap="round"/><path d="M3.3 21.7 L8.6 16.4" stroke="#f2c830" stroke-width="2" stroke-linecap="round"/><circle cx="14.5" cy="9.5" r="7.3" fill="#f4f6f8" stroke="#777" stroke-width="1.3"/><path d="M10.5 9.5h8" stroke="#5a8fd0" stroke-width="2.2"/></svg>
<svg class="ic" style="left:462.9px;top:62.8px;opacity:1.0" width="24" height="24" viewBox="0 0 24 24"><path d="M3 22 L9.5 15.5" stroke="#222" stroke-width="3.2" stroke-linecap="round"/><path d="M3.3 21.7 L8.6 16.4" stroke="#e8d080" stroke-width="2" stroke-linecap="round"/><circle cx="14.5" cy="9.5" r="7.3" fill="#f0f0f0" stroke="#777" stroke-width="1.3"/><text x="14.5" y="12.5" font-size="7.5" font-weight="bold" text-anchor="middle" fill="#bbb" font-family="Liberation Sans">1:1</text></svg>
<svg class="ic" style="left:500.0px;top:62.8px;opacity:1.0" width="24" height="24" viewBox="0 0 24 24"><path d="M13 3h8v8l-2.5-2.5-3 3-3-3 3-3z M13 21h8v-8l-2.5 2.5-3-3-3 3 3 3z M9 3H3v7" fill="#5e92cf"/><path d="M3 22 L9.5 15.5" stroke="#222" stroke-width="3.2" stroke-linecap="round"/><path d="M3.3 21.7 L8.6 16.4" stroke="#f2c830" stroke-width="2" stroke-linecap="round"/><circle cx="14.5" cy="9.5" r="7.3" fill="rgba(240,244,248,0.8)" stroke="#777" stroke-width="1.3"/></svg>
<svg class="ic" style="left:537.1px;top:62.8px;opacity:1.0" width="24" height="24" viewBox="0 0 24 24"><rect x="1" y="2" width="13" height="12" fill="#f7e24a" stroke="#333" stroke-width="0.8" stroke-dasharray="1.5 1"/><path d="M3 22 L9.5 15.5" stroke="#222" stroke-width="3.2" stroke-linecap="round"/><path d="M3.3 21.7 L8.6 16.4" stroke="#f2c830" stroke-width="2" stroke-linecap="round"/><circle cx="14.5" cy="9.5" r="7.3" fill="rgba(240,240,225,0.85)" stroke="#777" stroke-width="1.3"/></svg>
<svg class="ic" style="left:576.6px;top:62.2px;opacity:1.0" width="24" height="24" viewBox="0 0 24 24"><path d="M3 8h13v12H3z" fill="#dcc8d8" stroke="#9a7a9a" stroke-width="0.8"/><path d="M3 22 L9.5 15.5" stroke="#222" stroke-width="3.2" stroke-linecap="round"/><path d="M3.3 21.7 L8.6 16.4" stroke="#f2c830" stroke-width="2" stroke-linecap="round"/><circle cx="14.5" cy="9.5" r="7.3" fill="rgba(240,240,240,0.85)" stroke="#777" stroke-width="1.3"/></svg>
<svg class="ic" style="left:615.0px;top:62.2px;opacity:1.0" width="24" height="24" viewBox="0 0 24 24"><path d="M3 22 L9.5 15.5" stroke="#222" stroke-width="3.2" stroke-linecap="round"/><path d="M3.3 21.7 L8.6 16.4" stroke="#f2c830" stroke-width="2" stroke-linecap="round"/><circle cx="14.5" cy="9.5" r="7.3" fill="#f4f6f8" stroke="#777" stroke-width="1.3"/><rect x="12" y="13" width="10" height="10" fill="#5e92cf"/><path d="M19 15l-4 3 4 3" stroke="#fff" stroke-width="1.8" fill="none"/></svg>
<svg class="ic" style="left:653.5px;top:62.2px;opacity:1.0" width="24" height="24" viewBox="0 0 24 24"><path d="M3 22 L9.5 15.5" stroke="#222" stroke-width="3.2" stroke-linecap="round"/><path d="M3.3 21.7 L8.6 16.4" stroke="#e8d080" stroke-width="2" stroke-linecap="round"/><circle cx="14.5" cy="9.5" r="7.3" fill="#f4f4f4" stroke="#777" stroke-width="1.3"/><rect x="12" y="13" width="10" height="10" fill="#a8c4e6"/><path d="M15 15l4 3-4 3" stroke="#fff" stroke-width="1.8" fill="none"/></svg>
<svg class="ic" style="left:690.8px;top:62.2px;opacity:1.0" width="24" height="24" viewBox="0 0 24 24"><path d="M4.5 11A8 8 0 0 1 18 5.5l2-2v7h-7l2.5-2.5A5 5 0 0 0 7.5 11z" fill="#4f8ad8" stroke="#2f66b0" stroke-width="0.6"/><path d="M19.5 13A8 8 0 0 1 6 18.5l-2 2v-7h7l-2.5 2.5A5 5 0 0 0 16.5 13z" fill="#4f8ad8" stroke="#2f66b0" stroke-width="0.6"/></svg>
<div class="hd" style="left:728.0px;top:61.2px"></div><div class="hd" style="left:731.5px;top:63.2px"></div><div class="hd" style="left:728.0px;top:65.2px"></div><div class="hd" style="left:731.5px;top:67.2px"></div><div class="hd" style="left:728.0px;top:69.2px"></div><div class="hd" style="left:731.5px;top:71.2px"></div><div class="hd" style="left:728.0px;top:73.2px"></div><div class="hd" style="left:731.5px;top:75.2px"></div><div class="hd" style="left:728.0px;top:77.2px"></div><div class="hd" style="left:731.5px;top:79.2px"></div><div class="hd" style="left:728.0px;top:81.2px"></div><div class="hd" style="left:731.5px;top:83.2px"></div>
<svg class="ic" style="left:737.2px;top:62.2px;opacity:1.0" width="24" height="24" viewBox="0 0 24 24"><circle cx="9" cy="9" r="7.5" fill="#5a92d6" stroke="#3d6eb0" stroke-width="0.8"/><text x="9" y="13" font-size="10" font-style="italic" font-weight="bold" text-anchor="middle" fill="#fff" font-family="Liberation Serif">i</text><path d="M12 11v11l2.8-2.8 2 4 1.8-.9-2-4h4z" fill="#fff" stroke="#222" stroke-width="0.9"/></svg>
<svg class="ic" style="left:780.2px;top:62.2px;opacity:1.0" width="24" height="24" viewBox="0 0 24 24"><circle cx="10" cy="10" r="7" fill="#ddd" stroke="#aaa" stroke-width="2.5" stroke-dasharray="2.2 1.4"/><circle cx="10" cy="10" r="4.5" fill="#8fb2de"/><path d="M9 8v4l3-2z" fill="#fff"/><path d="M13 12v10l2.5-2.5 1.8 3.5 1.6-.8-1.8-3.5h3.5z" fill="#fff" stroke="#999" stroke-width="0.8"/></svg>
<svg class="ic" style="left:808.0px;top:75.9px;opacity:1.0" width="9" height="8" viewBox="0 0 9 8"><path d="M0.5 0.5h8l-4 7z" fill="#5a5a5a"/></svg>
<svg class="ic" style="left:830.0px;top:62.2px;opacity:1.0" width="24" height="24" viewBox="0 0 24 24"><rect x="1.5" y="2" width="11" height="11" fill="#f7e24a" stroke="#777" stroke-width="0.7"/><rect x="14" y="2" width="5" height="11" fill="#eee" stroke="#999" stroke-width="0.7"/><rect x="1.5" y="16" width="11" height="6" fill="#eee" stroke="#999" stroke-width="0.7"/><path d="M9 8v12l3-3 2 4.5 2-1-2-4.5h4z" fill="#fff" stroke="#111" stroke-width="0.9"/></svg>
<svg class="ic" style="left:857.8px;top:75.9px;opacity:1.0" width="9" height="8" viewBox="0 0 9 8"><path d="M0.5 0.5h8l-4 7z" fill="#5a5a5a"/></svg>
<svg class="ic" style="left:877.4px;top:64.5px;opacity:1.0" width="24" height="24" viewBox="0 0 24 24"><rect x="2" y="2" width="14" height="14" fill="#f7e24a" stroke="#333" stroke-width="0.8" stroke-dasharray="1.5 1"/><rect x="13" y="13" width="10" height="10" rx="2" fill="#e03030"/><circle cx="18" cy="18" r="3" fill="none" stroke="#fff" stroke-width="1.2"/><path d="M16 20l4-4" stroke="#fff" stroke-width="1.2"/></svg>
<svg class="ic" style="left:914.7px;top:64.5px;opacity:1.0" width="24" height="24" viewBox="0 0 24 24"><rect x="9" y="9" width="13" height="13" fill="#f7e24a" stroke="#333" stroke-width="0.8" stroke-dasharray="1.5 1"/><text x="6" y="15" font-size="17" fill="#6a3a8a" font-family="Liberation Serif" text-anchor="middle">ε</text></svg>
<svg class="ic" style="left:952.0px;top:63.4px;opacity:1.0" width="24" height="24" viewBox="0 0 24 24"><rect x="2.5" y="3.5" width="19" height="17" fill="#fff" stroke="#3a5a8a" stroke-width="1.2"/><rect x="2.5" y="3.5" width="19" height="3.5" fill="#3a6aaa"/><path d="M4.5 9.5h15M4.5 12h15M4.5 14.5h15M4.5 17h15M9 8v11" stroke="#4a7ab8" stroke-width="0.9"/></svg>
<svg class="ic" style="left:989.2px;top:62.5px;opacity:1.0" width="24" height="24" viewBox="0 0 24 24"><path d="M2.5 2v20M21.5 2v20M2.5 21.5h19" stroke="#999" stroke-width="1"/><path d="M2.5 6h19M2.5 12h19M2.5 18h19" stroke="#aaa" stroke-width="0.8"/><circle cx="13" cy="6" r="2" fill="#fff" stroke="#e07070"/><circle cx="18" cy="6" r="2" fill="#fff" stroke="#e07070"/><circle cx="8" cy="12" r="2" fill="#fff" stroke="#70c070"/><circle cx="13" cy="12" r="2" fill="#fff" stroke="#70c070"/><circle cx="8" cy="18" r="2" fill="#fff" stroke="#7aa0d8"/><circle cx="18" cy="18" r="2" fill="#fff" stroke="#7aa0d8"/></svg>
<svg class="ic" style="left:1033.5px;top:63.4px;opacity:1.0" width="24" height="24" viewBox="0 0 24 24"><path d="M3.5 5h16M3.5 3v4M19.5 3v4" stroke="#2a4a6a" stroke-width="1.3"/><rect x="1.5" y="11" width="21" height="8" fill="#e4e8e0" stroke="#333" stroke-width="1"/><path d="M5 11v3M8.5 11v2M12 11v3M15.5 11v2M19 11v3" stroke="#333" stroke-width="0.9"/></svg>
<svg class="ic" style="left:1059.5px;top:76.7px;opacity:1.0" width="9" height="8" viewBox="0 0 9 8"><path d="M0.5 0.5h8l-4 7z" fill="#5a5a5a"/></svg>
<svg class="ic" style="left:1077.7px;top:61.6px;opacity:1.0" width="24" height="24" viewBox="0 0 24 24"><path d="M3 3h18a2 2 0 0 1 2 2v9a2 2 0 0 1-2 2H10l-5 5v-5H3a2 2 0 0 1-2-2V5a2 2 0 0 1 2-2z" fill="#f8de68" stroke="#c8a830" stroke-width="1"/></svg>
<svg class="ic" style="left:1117.6px;top:64.2px;opacity:1.0" width="24" height="24" viewBox="0 0 24 24"><rect x="1.5" y="5" width="16" height="13" fill="none" stroke="#555" stroke-width="0.9" stroke-dasharray="1.2 1.2"/><path d="M10 2h5v5l-2.5-1.5-2.5 1.5z" fill="#f0c830" stroke="#a08010" stroke-width="0.6"/><rect x="12" y="13" width="11" height="11" rx="2" fill="#d0a010"/><path d="M17.5 14.5v8M13.5 18.5h8M14.5 15.5l6 6M20.5 15.5l-6 6" stroke="#fff" stroke-width="1"/></svg>
<svg class="ic" style="left:1153.0px;top:60.7px;opacity:1.0" width="24" height="24" viewBox="0 0 24 24"><rect x="3" y="7" width="17" height="13" fill="none" stroke="#555" stroke-width="0.9" stroke-dasharray="1.2 1.2"/><path d="M12 3h5v5l-2.5-1.5-2.5 1.5z" fill="#f0c830" stroke="#a08010" stroke-width="0.6"/></svg>
<svg class="ic" style="left:1199.9px;top:62.5px;opacity:1.0" width="24" height="24" viewBox="0 0 24 24"><path d="M5 2h17v15H8l-6 5 3-5z" fill="#dce6f0" stroke="#8a98a8" stroke-width="1"/><text x="13.5" y="14" font-size="12" fill="#222" text-anchor="middle" font-family="Liberation Serif">T</text></svg>
<svg class="ic" style="left:1223.3px;top:76.7px;opacity:1.0" width="9" height="8" viewBox="0 0 9 8"><path d="M0.5 0.5h8l-4 7z" fill="#5a5a5a"/></svg>
<div class="hd" style="left:1240.7px;top:61.5px"></div><div class="hd" style="left:1244.2px;top:63.5px"></div><div class="hd" style="left:1240.7px;top:65.5px"></div><div class="hd" style="left:1244.2px;top:67.5px"></div><div class="hd" style="left:1240.7px;top:69.5px"></div><div class="hd" style="left:1244.2px;top:71.5px"></div><div class="hd" style="left:1240.7px;top:73.5px"></div><div class="hd" style="left:1244.2px;top:75.5px"></div><div class="hd" style="left:1240.7px;top:77.5px"></div><div class="hd" style="left:1244.2px;top:79.5px"></div><div class="hd" style="left:1240.7px;top:81.5px"></div><div class="hd" style="left:1244.2px;top:83.5px"></div>
<svg class="ic" style="left:1251.2px;top:62.5px;opacity:1.0" width="24" height="24" viewBox="0 0 24 24"><rect x="3" y="2" width="19" height="20" fill="#5e92cf" stroke="#222" stroke-width="0.8"/><rect x="3" y="2" width="4" height="20" fill="#1e2e44"/><text x="14.5" y="16" font-size="12" fill="#fff" text-anchor="middle" font-family="Liberation Sans">?</text></svg>
<svg class="ic" style="left:1288.4px;top:62.5px;opacity:1.0" width="24" height="24" viewBox="0 0 24 24"><path d="M2 2v15l3.5-3.5 2.5 5 2-1-2.5-5h5z" fill="#fff" stroke="#222" stroke-width="0.9"/><text x="17" y="21" font-size="17" fill="#111" text-anchor="middle" font-family="Liberation Serif">?</text></svg>
<div class="hd" style="left:64.0px;top:97.6px"></div><div class="hd" style="left:67.5px;top:99.6px"></div><div class="hd" style="left:64.0px;top:101.6px"></div><div class="hd" style="left:67.5px;top:103.6px"></div><div class="hd" style="left:64.0px;top:105.6px"></div><div class="hd" style="left:67.5px;top:107.6px"></div><div class="hd" style="left:64.0px;top:109.6px"></div><div class="hd" style="left:67.5px;top:111.6px"></div><div class="hd" style="left:64.0px;top:113.6px"></div><div class="hd" style="left:67.5px;top:115.6px"></div><div class="hd" style="left:64.0px;top:117.6px"></div><div class="hd" style="left:67.5px;top:119.6px"></div>
<svg class="ic" style="left:74.7px;top:98.6px;opacity:1.0" width="24" height="24" viewBox="0 0 24 24"><g opacity="0.55"><path d="M3 21l1.5-5 9-12 3 2-9 12z" fill="#e8a070" stroke="#aa7755" stroke-width="0.8"/><path d="M7 22l1.5-5 9-12 3 2-9 12z" fill="#f0a070" stroke="#aa7755" stroke-width="0.8"/></g></svg>
<svg class="ic" style="left:91.5px;top:114.0px;opacity:1.0" width="9" height="8" viewBox="0 0 9 8"><path d="M0.5 0.5h8l-4 7z" fill="#5a5a5a"/></svg>
<svg class="ic" style="left:110.5px;top:98.6px;opacity:1.0" width="24" height="24" viewBox="0 0 24 24"><path d="M5 22l1-6 10-13 3.5 2.5-10 13z" fill="#f0d830" stroke="#444" stroke-width="0.9"/><path d="M16 3l3.5 2.5" stroke="#eee" stroke-width="2"/></svg>
<svg class="ic" style="left:148.9px;top:98.6px;opacity:1.0" width="24" height="24" viewBox="0 0 24 24"><g opacity="0.5"><rect x="3" y="2.5" width="18" height="19" rx="2" fill="#6494d2" stroke="#3f6ea8"/><rect x="6" y="3.5" width="12" height="8" fill="#f0f0f0"/><path d="M7.5 5.5h9M7.5 7.5h9M7.5 9.5h9" stroke="#555" stroke-width="0.8"/><rect x="7" y="14.5" width="10" height="6" fill="#ececec"/><rect x="8.2" y="15.5" width="2.2" height="4" fill="#2c4a80"/></g><path d="M13 23l1-4 6-8 2 1.5-6 8z" fill="#f0a060" stroke="#a07050" stroke-width="0.7"/></svg>
<svg class="ic" style="left:189.7px;top:98.6px;opacity:1.0" width="24" height="24" viewBox="0 0 24 24"><g opacity="0.6"><path d="M2 3l7 13 6-10h6" fill="none" stroke="#4a6a8a" stroke-width="1"/><circle cx="2" cy="3" r="1.3" fill="#fff" stroke="#4a6a8a" stroke-width="0.8"/><circle cx="9" cy="16" r="1.3" fill="#fff" stroke="#4a6a8a" stroke-width="0.8"/><circle cx="15" cy="6" r="1.3" fill="#fff" stroke="#4a6a8a" stroke-width="0.8"/><circle cx="21" cy="6" r="1.3" fill="#fff" stroke="#4a6a8a" stroke-width="0.8"/><rect x="12" y="13" width="11" height="11" rx="2" fill="#d8b020"/></g><path d="M17.5 15v7M14 18.5h7M15 16l5 5M20 16l-5 5" stroke="#fff" stroke-width="0.9"/></svg>
<svg class="ic" style="left:225.5px;top:98.6px;opacity:1.0" width="24" height="24" viewBox="0 0 24 24"><g opacity="0.6"><path d="M3 4c3-3 10-2 14 0s2 7-2 8-9 3-11 0-4-5-1-8z" fill="#a8d0a0" stroke="#789a70" stroke-width="0.8"/><rect x="12" y="13" width="11" height="10" fill="#5e92cf"/></g><path d="M14 18h5M17 15.5l3 2.5-3 2.5" stroke="#fff" stroke-width="1.5" fill="none"/></svg>
<svg class="ic" style="left:263.8px;top:98.6px;opacity:1.0" width="24" height="24" viewBox="0 0 24 24"><g opacity="0.55"><path d="M2 22l6-13h12" stroke="#555" stroke-width="0.9" fill="none"/><circle cx="8" cy="9" r="1.8" fill="#c8e0c0" stroke="#555" stroke-width="0.7"/><path d="M11 13l9 9M20 13l-9 9" stroke="#c89840" stroke-width="2.2"/></g></svg>
<svg class="ic" style="left:303.4px;top:99.9px;opacity:1.0" width="24" height="24" viewBox="0 0 24 24"><g opacity="0.65"><rect x="2" y="2" width="14" height="14" fill="#f7e24a" stroke="#555" stroke-width="0.8" stroke-dasharray="1.5 1"/></g><rect x="13" y="13" width="10" height="10" rx="2" fill="#e04545"/><path d="M15.5 15.5l5 5M20.5 15.5l-5 5" stroke="#fff" stroke-width="1.5"/></svg>
<svg class="ic" style="left:340.5px;top:98.6px;opacity:1.0" width="24" height="24" viewBox="0 0 24 24"><g opacity="0.65"><path d="M1 9l13 4M1 15l13-4" stroke="#999" stroke-width="1.2"/><circle cx="18" cy="8" r="3.5" fill="none" stroke="#d04040" stroke-width="1.5"/><circle cx="18" cy="16" r="3.5" fill="none" stroke="#d04040" stroke-width="1.5"/></g></svg>
<svg class="ic" style="left:376.4px;top:98.6px;opacity:1.0" width="24" height="24" viewBox="0 0 24 24"><g opacity="0.45"><path d="M8 2.5h8l4 4v13H8z" fill="#fff" stroke="#777" stroke-width="0.9"/><path d="M3 5.5h8l4 4v13H3z" fill="#fff" stroke="#777" stroke-width="0.9"/><path d="M5 13h7M5 15.5h7M5 18h7" stroke="#888" stroke-width="0.8"/></g></svg>
<svg class="ic" style="left:415.9px;top:98.6px;opacity:1.0" width="24" height="24" viewBox="0 0 24 24"><g opacity="0.55"><rect x="4" y="3.5" width="16" height="19" rx="1" fill="#fff" stroke="#d8a060" stroke-width="1.2"/><rect x="8" y="2" width="8" height="3.5" fill="#eee" stroke="#999" stroke-width="0.8"/><path d="M7 10h10M7 13h10M7 16h10M7 19h10" stroke="#999" stroke-width="0.8"/></g></svg>
<div class="hd" style="left:452.1px;top:97.6px"></div><div class="hd" style="left:455.6px;top:99.6px"></div><div class="hd" style="left:452.1px;top:101.6px"></div><div class="hd" style="left:455.6px;top:103.6px"></div><div class="hd" style="left:452.1px;top:105.6px"></div><div class="hd" style="left:455.6px;top:107.6px"></div><div class="hd" style="left:452.1px;top:109.6px"></div><div class="hd" style="left:455.6px;top:111.6px"></div><div class="hd" style="left:452.1px;top:113.6px"></div><div class="hd" style="left:455.6px;top:115.6px"></div><div class="hd" style="left:452.1px;top:117.6px"></div><div class="hd" style="left:455.6px;top:119.6px"></div>
<svg class="ic" style="left:461.7px;top:96.2px;opacity:1.0" width="24" height="24" viewBox="0 0 24 24"><path d="M1 12l5-6h17v12H6z" fill="#f0d040" stroke="#a08820" stroke-width="0.8"/><text x="14" y="15.5" font-size="8.5" font-weight="bold" fill="#222" text-anchor="middle" font-family="Liberation Sans">abc</text></svg>
<div style="position:absolute;left:500px;top:99px;width:22px;height:24px;border:1px solid #7a9ad8;background:rgba(190,210,240,0.4)"></div>
<svg class="ic" style="left:498.8px;top:98.6px;opacity:1.0" width="24" height="24" viewBox="0 0 24 24"><path d="M1 9l4-5h13v10H5z" fill="#f0d040" stroke="#a08820" stroke-width="0.8"/><text x="11.5" y="12" font-size="7" font-weight="bold" fill="#222" text-anchor="middle" font-family="Liberation Sans">ab</text><circle cx="17" cy="18" r="4" fill="#d02030"/><path d="M16 8v6" stroke="#888" stroke-width="1.2"/></svg>
<svg class="ic" style="left:536.0px;top:99.9px;opacity:1.0" width="24" height="24" viewBox="0 0 24 24"><g opacity="0.5"><path d="M1 9l4-5h13v10H5z" fill="#f0d040" stroke="#a08820" stroke-width="0.8"/><text x="11.5" y="12" font-size="7" font-weight="bold" fill="#222" text-anchor="middle" font-family="Liberation Sans">ab</text><circle cx="17" cy="18" r="4" fill="#d02030"/></g></svg>
<svg class="ic" style="left:576.6px;top:99.5px;opacity:1.0" width="24" height="24" viewBox="0 0 24 24"><g opacity="0.5"><path d="M1 9l4-5h15v10H5z" fill="#f0d040" stroke="#a08820" stroke-width="0.8"/><text x="12.5" y="12" font-size="7.5" font-weight="bold" fill="#222" text-anchor="middle" font-family="Liberation Sans">abc</text><path d="M8 19c3-4 9-4 12 0-3 4-9 4-12 0z" fill="#fff" stroke="#555" stroke-width="0.8"/><circle cx="14" cy="19" r="2" fill="#3a6aaa"/></g></svg>
<svg class="ic" style="left:615.0px;top:99.5px;opacity:1.0" width="24" height="24" viewBox="0 0 24 24"><g opacity="0.5"><path d="M1 9l4-5h15v10H5z" fill="#f0d040" stroke="#a08820" stroke-width="0.8"/><text x="12.5" y="12" font-size="7.5" font-weight="bold" fill="#222" text-anchor="middle" font-family="Liberation Sans">abc</text><rect x="13" y="13" width="10" height="10" fill="#5e92cf"/><path d="M15 18h5M18 16l2.5 2-2.5 2" stroke="#fff" stroke-width="1.3" fill="none"/></g></svg>
<svg class="ic" style="left:652.4px;top:99.5px;opacity:1.0" width="24" height="24" viewBox="0 0 24 24"><g opacity="0.5"><path d="M1 9l4-5h15v10H5z" fill="#f0d040" stroke="#a08820" stroke-width="0.8"/><text x="12.5" y="12" font-size="7.5" font-weight="bold" fill="#222" text-anchor="middle" font-family="Liberation Sans">abc</text><rect x="13" y="13" width="10" height="10" fill="#5e92cf"/><circle cx="18" cy="18" r="3" fill="none" stroke="#fff" stroke-width="1.3"/></g></svg>
<svg class="ic" style="left:690.8px;top:99.5px;opacity:1.0" width="24" height="24" viewBox="0 0 24 24"><g opacity="0.5"><path d="M1 9l4-5h15v10H5z" fill="#f0d040" stroke="#a08820" stroke-width="0.8"/><text x="12.5" y="12" font-size="7.5" font-weight="bold" fill="#222" text-anchor="middle" font-family="Liberation Sans">abc</text><rect x="13" y="13" width="10" height="10" fill="#d8b020"/><path d="M15 21l6-6" stroke="#fff" stroke-width="1.5"/></g></svg>
<div class="hd" style="left:728.0px;top:97.4px"></div><div class="hd" style="left:731.5px;top:99.4px"></div><div class="hd" style="left:728.0px;top:101.4px"></div><div class="hd" style="left:731.5px;top:103.4px"></div><div class="hd" style="left:728.0px;top:105.4px"></div><div class="hd" style="left:731.5px;top:107.4px"></div><div class="hd" style="left:728.0px;top:109.4px"></div><div class="hd" style="left:731.5px;top:111.4px"></div><div class="hd" style="left:728.0px;top:113.4px"></div><div class="hd" style="left:731.5px;top:115.4px"></div><div class="hd" style="left:728.0px;top:117.4px"></div><div class="hd" style="left:731.5px;top:119.4px"></div>
<div class="hd" style="left:740.5px;top:97.4px"></div><div class="hd" style="left:744.0px;top:99.4px"></div><div class="hd" style="left:740.5px;top:101.4px"></div><div class="hd" style="left:744.0px;top:103.4px"></div><div class="hd" style="left:740.5px;top:105.4px"></div><div class="hd" style="left:744.0px;top:107.4px"></div><div class="hd" style="left:740.5px;top:109.4px"></div><div class="hd" style="left:744.0px;top:111.4px"></div><div class="hd" style="left:740.5px;top:113.4px"></div><div class="hd" style="left:744.0px;top:115.4px"></div><div class="hd" style="left:740.5px;top:117.4px"></div><div class="hd" style="left:744.0px;top:119.4px"></div>
<div class="hd" style="left:63.5px;top:135.4px"></div><div class="hd" style="left:66.0px;top:138.4px"></div><div class="hd" style="left:68.5px;top:135.4px"></div><div class="hd" style="left:71.0px;top:138.4px"></div><div class="hd" style="left:73.5px;top:135.4px"></div><div class="hd" style="left:76.0px;top:138.4px"></div><div class="hd" style="left:78.5px;top:135.4px"></div><div class="hd" style="left:81.0px;top:138.4px"></div><div class="hd" style="left:83.5px;top:135.4px"></div><div class="hd" style="left:86.0px;top:138.4px"></div><div class="hd" style="left:88.5px;top:135.4px"></div><div class="hd" style="left:91.0px;top:138.4px"></div><div class="hd" style="left:93.5px;top:135.4px"></div><div class="hd" style="left:96.0px;top:138.4px"></div>
<svg class="ic" style="left:69.5px;top:146.6px;opacity:1.0" width="24" height="24" viewBox="0 0 24 24"><path d="M3 3l7 15 5-13h6" fill="none" stroke="#3a5a7a" stroke-width="1.3"/><circle cx="3" cy="3" r="1.8" fill="#fff" stroke="#3a5a7a"/><circle cx="10" cy="18" r="1.8" fill="#fff" stroke="#3a5a7a"/><circle cx="15" cy="5" r="1.8" fill="#fff" stroke="#3a5a7a"/><circle cx="21" cy="5" r="1.8" fill="#fff" stroke="#3a5a7a"/><rect x="13" y="13" width="10" height="10" rx="2" fill="#4a9a50" stroke="#fff" stroke-width="0.8"/><path d="M18 15v6M15 18h6" stroke="#fff" stroke-width="1.8"/></svg>
<svg class="ic" style="left:69.5px;top:181.9px;opacity:1.0" width="24" height="24" viewBox="0 0 24 24"><rect x="2" y="2" width="15" height="15" fill="#8ab0d8"/><rect x="2" y="2" width="5" height="5" fill="#1e3050"/><rect x="12" y="2" width="5" height="5" fill="#1e3050"/><rect x="7" y="7" width="5" height="5" fill="#1e3050"/><rect x="2" y="12" width="5" height="5" fill="#1e3050"/><rect x="13" y="13" width="10" height="10" rx="2" fill="#4a9a50" stroke="#fff" stroke-width="0.8"/><path d="M18 15v6M15 18h6" stroke="#fff" stroke-width="1.8"/></svg>
<svg class="ic" style="left:69.5px;top:220.8px;opacity:1.0" width="24" height="24" viewBox="0 0 24 24"><path d="M4 4c3-3 11-3 13 1 2 4-1 7-3 8v4h-3v-3h-2v3H6v-5C3 10 2 6 4 4z" fill="#5e8fc8" stroke="#1e3050" stroke-width="1"/><rect x="13" y="13" width="10" height="10" rx="2" fill="#4a9a50" stroke="#fff" stroke-width="0.8"/><path d="M18 15v6M15 18h6" stroke="#fff" stroke-width="1.8"/></svg>
<svg class="ic" style="left:69.5px;top:259.6px;opacity:1.0" width="24" height="24" viewBox="0 0 24 24"><path d="M2 22c4-10 9-17 19-20-2 8-7 14-14 16l-5 4z" fill="#8ab4e0" stroke="#2a4a70" stroke-width="1"/><rect x="13" y="13" width="10" height="10" rx="2" fill="#4a9a50" stroke="#fff" stroke-width="0.8"/><path d="M18 15v6M15 18h6" stroke="#fff" stroke-width="1.8"/></svg>
<svg class="ic" style="left:69.5px;top:296.7px;opacity:1.0" width="24" height="24" viewBox="0 0 24 24"><path d="M2 3c8 0 16 4 19 14H7z" fill="#5e8fc8" stroke="#1e3050" stroke-width="1"/><path d="M6 4l3 13M10 5l3 12M14 7l2 10" stroke="#1e3050" stroke-width="0.7"/><rect x="13" y="13" width="10" height="10" rx="2" fill="#4a9a50" stroke="#fff" stroke-width="0.8"/><path d="M18 15v6M15 18h6" stroke="#fff" stroke-width="1.8"/></svg>
<svg class="ic" style="left:69.5px;top:335.6px;opacity:1.0" width="24" height="24" viewBox="0 0 24 24"><circle cx="11" cy="11" r="9" fill="#d8e4f0" stroke="#3a5a8a" stroke-width="1.2"/><path d="M2 11h18M11 2c-4 3-4 15 0 18M11 2c4 3 4 15 0 18M4 6h14M4 16h14" stroke="#3a5a8a" stroke-width="0.9" fill="none"/><rect x="13" y="13" width="10" height="10" rx="2" fill="#4a9a50" stroke="#fff" stroke-width="0.8"/><path d="M18 15v6M15 18h6" stroke="#fff" stroke-width="1.8"/></svg>
<svg class="ic" style="left:69.5px;top:372.7px;opacity:1.0" width="24" height="24" viewBox="0 0 24 24"><circle cx="11" cy="11" r="9" fill="#2a4a78" stroke="#1e3050" stroke-width="1.2"/><path d="M2 11h18M4 6h14M4 16h14" stroke="#d8e4f0" stroke-width="1.8"/><rect x="13" y="13" width="10" height="10" rx="2" fill="#4a9a50" stroke="#fff" stroke-width="0.8"/><path d="M18 15v6M15 18h6" stroke="#fff" stroke-width="1.8"/></svg>
<svg class="ic" style="left:69.5px;top:409.8px;opacity:1.0" width="24" height="24" viewBox="0 0 24 24"><circle cx="11" cy="11" r="9" fill="#d8e4f0" stroke="#3a5a8a" stroke-width="1.2"/><path d="M2 11h18M11 2c-4 3-4 15 0 18M11 2c4 3 4 15 0 18M4 6h14M4 16h14" stroke="#3a5a8a" stroke-width="0.9" fill="none"/><path d="M5 7l5 9 4-8h4" stroke="#222" stroke-width="1.2" fill="none"/><rect x="13" y="13" width="10" height="10" rx="2" fill="#4a9a50" stroke="#fff" stroke-width="0.8"/><path d="M18 15v6M15 18h6" stroke="#fff" stroke-width="1.8"/></svg>
<svg class="ic" style="left:69.5px;top:448.7px;opacity:1.0" width="24" height="24" viewBox="0 0 24 24"><path d="M8 3a4 4 0 1 1 2 7c0 4-2 7-5 9l-1-1c2-2 3-4 2-6a4 4 0 0 1 2-9z" fill="#2a4a78"/><rect x="13" y="13" width="10" height="10" rx="2" fill="#4a9a50" stroke="#fff" stroke-width="0.8"/><path d="M18 15v6M15 18h6" stroke="#fff" stroke-width="1.8"/></svg>
<svg class="ic" style="left:69.5px;top:487.6px;opacity:1.0" width="24" height="24" viewBox="0 0 24 24"><path d="M2 22c4-10 9-17 19-20-2 8-7 14-14 16l-5 4z" fill="#8ab4e0" stroke="#2a4a70" stroke-width="1"/><rect x="12" y="13" width="10" height="10" rx="2" fill="#d8a820"/><path d="M17 14.5v7M13.5 18h7M14.5 15.5l5 5M19.5 15.5l-5 5" stroke="#fff" stroke-width="0.9"/></svg>
<svg class="ic" style="left:94.5px;top:502.0px;opacity:1.0" width="9" height="8" viewBox="0 0 9 8"><path d="M0.5 0.5h8l-4 7z" fill="#5a5a5a"/></svg>
<svg class="ic" style="left:69.5px;top:524.7px;opacity:1.0" width="24" height="24" viewBox="0 0 24 24"><rect x="2.5" y="2.5" width="16" height="16" fill="#eef0ee" stroke="#777" stroke-width="1"/><rect x="13" y="13" width="9" height="9" rx="2" fill="#e04a50"/><path d="M14.5 17.5h6" stroke="#fff" stroke-width="1.8"/></svg>
<div class="hd" style="left:63.5px;top:562.9px"></div><div class="hd" style="left:66.0px;top:565.9px"></div><div class="hd" style="left:68.5px;top:562.9px"></div><div class="hd" style="left:71.0px;top:565.9px"></div><div class="hd" style="left:73.5px;top:562.9px"></div><div class="hd" style="left:76.0px;top:565.9px"></div><div class="hd" style="left:78.5px;top:562.9px"></div><div class="hd" style="left:81.0px;top:565.9px"></div><div class="hd" style="left:83.5px;top:562.9px"></div><div class="hd" style="left:86.0px;top:565.9px"></div><div class="hd" style="left:88.5px;top:562.9px"></div><div class="hd" style="left:91.0px;top:565.9px"></div><div class="hd" style="left:93.5px;top:562.9px"></div><div class="hd" style="left:96.0px;top:565.9px"></div>
<svg class="ic" style="left:107px;top:134px" width="14" height="14" viewBox="0 0 14 14"><circle cx="7" cy="7" r="6.8" fill="#4a4a4a"/><path d="M4.5 4.5l5 5M9.5 4.5l-5 5" stroke="#fff" stroke-width="1.8"/></svg>
<svg class="ic" style="left:127.5px;top:134px" width="14" height="14" viewBox="0 0 14 14"><circle cx="7" cy="7" r="6.8" fill="#4a4a4a"/><rect x="3.5" y="6" width="5" height="4" fill="none" stroke="#fff" stroke-width="1.1"/><path d="M5.5 5.5v-1.5h5v4h-1.5" fill="none" stroke="#fff" stroke-width="1.1"/></svg>
<div class="tri" style="left:113px;top:160.9px;border-left-color:#7a7a7a"></div>
<svg class="ic" style="left:132.0px;top:154.9px;opacity:1.0" width="18" height="20" viewBox="0 0 18 20"><rect x="1.5" y="4.5" width="13" height="13" rx="2.5" fill="url(#cbg)" stroke="#4a4a6a" stroke-width="1"/><path d="M4 10l4 5 8-13" fill="none" stroke="#1a2a3a" stroke-width="2.3" stroke-linecap="round"/></svg>
<svg class="ic" style="left:159.0px;top:155.9px;opacity:1.0" width="18" height="18" viewBox="0 0 18 18"><path d="M4.5 13l1.5 1.5-1.5 1.5-1.5-1.5z M6.5 5l1.5 1.5-1.5 1.5-1.5-1.5z M13.5 2l1.5 1.5-1.5 1.5-1.5-1.5z" fill="#fff" stroke="#666" stroke-width="0.7"/></svg>
<div class="lname" style="top:157.4px;color:#111;">places</div>
<div class="tri" style="left:113px;top:180.9px;border-left-color:#7a7a7a"></div>
<svg class="ic" style="left:132.0px;top:174.9px;opacity:1.0" width="18" height="20" viewBox="0 0 18 20"><rect x="1.5" y="4.5" width="13" height="13" rx="2.5" fill="url(#cbg)" stroke="#4a4a6a" stroke-width="1"/><path d="M4 10l4 5 8-13" fill="none" stroke="#1a2a3a" stroke-width="2.3" stroke-linecap="round"/></svg>
<svg class="ic" style="left:159.0px;top:177.9px;opacity:1.0" width="18" height="16" viewBox="0 0 18 16"><path d="M2.5 4c2-2 4-1 6 0s4-2 6 0 0 4 0 6-2 3-4 2-4 2-6 1-3-2-2-4-2-3 0-5z" fill="#e2e2e2" stroke="#9a9a9a" stroke-width="0.9"/></svg>
<div class="lname" style="top:177.4px;color:#111;">buildings</div>
<div style="position:absolute;left:106px;top:196.2px;width:292px;height:19.6px;background:#3875d7"></div>
<div class="tri" style="left:113px;top:200.9px;border-left-color:#8aa8d8"></div>
<svg class="ic" style="left:132.0px;top:194.9px;opacity:1.0" width="18" height="20" viewBox="0 0 18 20"><rect x="1.5" y="4.5" width="13" height="13" rx="2.5" fill="url(#cbg)" stroke="#4a4a6a" stroke-width="1"/><path d="M4 10l4 5 8-13" fill="none" stroke="#1a2a3a" stroke-width="2.3" stroke-linecap="round"/></svg>
<svg class="ic" style="left:159.0px;top:195.9px;opacity:1.0" width="18" height="18" viewBox="0 0 18 18"><path d="M2 4l4.5 11 4-10h4.5" fill="none" stroke="#ddd" stroke-width="0.8"/><circle cx="2" cy="4" r="0.9" fill="#fff" stroke="#ddd" stroke-width="0.6"/><circle cx="6.5" cy="15" r="0.9" fill="#fff" stroke="#ddd" stroke-width="0.6"/><circle cx="10.5" cy="5" r="0.9" fill="#fff" stroke="#ddd" stroke-width="0.6"/><circle cx="15" cy="5" r="0.9" fill="#fff" stroke="#ddd" stroke-width="0.6"/></svg>
<div class="lname" style="top:197.4px;color:#fff;text-decoration:underline;">roads</div>
<div class="tri" style="left:113px;top:220.9px;border-left-color:#7a7a7a"></div>
<svg class="ic" style="left:132.0px;top:214.9px;opacity:1.0" width="18" height="20" viewBox="0 0 18 20"><rect x="1.5" y="4.5" width="13" height="13" rx="2.5" fill="url(#cbg)" stroke="#4a4a6a" stroke-width="1"/><path d="M4 10l4 5 8-13" fill="none" stroke="#1a2a3a" stroke-width="2.3" stroke-linecap="round"/></svg>
<svg class="ic" style="left:159.0px;top:217.9px;opacity:1.0" width="18" height="16" viewBox="0 0 18 16"><path d="M2.5 4c2-2 4-1 6 0s4-2 6 0 0 4 0 6-2 3-4 2-4 2-6 1-3-2-2-4-2-3 0-5z" fill="#e2e2e2" stroke="#9a9a9a" stroke-width="0.9"/></svg>
<div class="lname" style="top:217.4px;color:#111;">water</div>
<div class="tri" style="left:113px;top:240.9px;border-left-color:#7a7a7a"></div>
<svg class="ic" style="left:132.0px;top:234.9px;opacity:1.0" width="18" height="20" viewBox="0 0 18 20"><rect x="1.5" y="4.5" width="13" height="13" rx="2.5" fill="url(#cbg)" stroke="#4a4a6a" stroke-width="1"/><path d="M4 10l4 5 8-13" fill="none" stroke="#1a2a3a" stroke-width="2.3" stroke-linecap="round"/></svg>
<svg class="ic" style="left:159.0px;top:235.9px;opacity:1.0" width="18" height="18" viewBox="0 0 18 18"><path d="M2 4l4.5 11 4-10h4.5" fill="none" stroke="#777" stroke-width="0.8"/><circle cx="2" cy="4" r="0.9" fill="#fff" stroke="#777" stroke-width="0.6"/><circle cx="6.5" cy="15" r="0.9" fill="#fff" stroke="#777" stroke-width="0.6"/><circle cx="10.5" cy="5" r="0.9" fill="#fff" stroke="#777" stroke-width="0.6"/><circle cx="15" cy="5" r="0.9" fill="#fff" stroke="#777" stroke-width="0.6"/></svg>
<div class="lname" style="top:237.4px;color:#111;">rivers</div>
<div class="tri" style="left:113px;top:260.9px;border-left-color:#7a7a7a"></div>
<svg class="ic" style="left:132.0px;top:254.9px;opacity:1.0" width="18" height="20" viewBox="0 0 18 20"><rect x="1.5" y="4.5" width="13" height="13" rx="2.5" fill="url(#cbg)" stroke="#4a4a6a" stroke-width="1"/><path d="M4 10l4 5 8-13" fill="none" stroke="#1a2a3a" stroke-width="2.3" stroke-linecap="round"/></svg>
<svg class="ic" style="left:159.0px;top:257.9px;opacity:1.0" width="18" height="16" viewBox="0 0 18 16"><path d="M2.5 4c2-2 4-1 6 0s4-2 6 0 0 4 0 6-2 3-4 2-4 2-6 1-3-2-2-4-2-3 0-5z" fill="#e2e2e2" stroke="#9a9a9a" stroke-width="0.9"/></svg>
<div class="lname" style="top:257.4px;color:#111;">landuse</div>
<div style="position:absolute;left:187px;top:1157px;width:61px;height:20px;background:linear-gradient(#9a9a9a,#7e7e7e);border:1px solid #6a6a6a;border-radius:4px 0 0 4px;color:#fff;font-size:13px;text-align:center;line-height:18px">Layers</div>
<div style="position:absolute;left:247px;top:1157px;width:71px;height:20px;background:linear-gradient(#fdfdfd,#e4e4e4);border:1px solid #8a8a8a;border-radius:0 4px 4px 0;color:#111;font-size:13px;text-align:center;line-height:18px">Browser</div>
<div class="st" style="left:1012px;top:1184px;color:#1a1aee;text-decoration:underline">There is a new plugin available</div>
<div class="btn" style="left:1200px;top:1183px;width:20px;height:20px"></div>
<svg class="ic" style="left:1202px;top:1185px" width="16" height="16" viewBox="0 0 16 16"><circle cx="6" cy="7" r="4" fill="none" stroke="#333" stroke-width="1.8"/><circle cx="9" cy="10" r="3.5" fill="none" stroke="#333" stroke-width="1.5"/><path d="M10 2l4 4" stroke="#333" stroke-width="1.2"/></svg>
<div class="st" style="left:1229px;top:1184px">Coordinate:</div>
<div style="position:absolute;left:1306px;top:1183px;width:300px;height:20px;background:#fff;border:1px solid #a0a0a0;font-size:13px;color:#111;text-align:center;line-height:18px;padding-left:4px">20.4562,-34.0585</div>
<div class="st" style="left:1615px;top:1184px">Scale</div>
<div style="position:absolute;left:1661px;top:1187px;width:94px;height:15px;background:#fff;border:1px solid #9a9a9a;border-radius:2px;font-size:13px;color:#111;line-height:14px;padding-left:2px">1:23396</div>
<div style="position:absolute;left:1740px;top:1188px;width:1px;height:13px;background:#ccc"></div>
<div style="position:absolute;left:1744px;top:1193px;width:0;height:0;border-top:4px solid #444;border-left:3px solid transparent;border-right:3px solid transparent"></div>
<div class="btn" style="left:1761px;top:1183px;width:20px;height:20px"></div>
<svg class="ic" style="left:1763px;top:1185px" width="16" height="16" viewBox="0 0 16 16"><circle cx="5" cy="5" r="3.5" fill="none" stroke="#e03030" stroke-width="1.3"/><path d="M2.5 7.5l5-5" stroke="#e03030" stroke-width="1.3"/><path d="M3 15l11-11v3l-9 8z" fill="#555"/></svg>
<svg class="ic" style="left:1787px;top:1183px" width="16" height="18" viewBox="0 0 16 18"><rect x="1" y="4" width="13" height="13" rx="2.5" fill="url(#cbg)" stroke="#4a4a6a" stroke-width="1"/><path d="M3.5 9.5l4 5 7.5-13" fill="none" stroke="#1a2a3a" stroke-width="2.2" stroke-linecap="round"/></svg>
<div class="st" style="left:1805px;top:1184px">Render</div>
<div class="st" style="left:1853px;top:1184px;color:#444">EPSG:4326</div>
<div class="btn" style="left:1931px;top:1183px;width:20px;height:20px;background:#f4f4f4;border-color:#777"></div>
<svg class="ic" style="left:1933px;top:1185px" width="16" height="16" viewBox="0 0 16 16"><circle cx="8" cy="8" r="6.5" fill="none" stroke="#777" stroke-width="1.2"/><rect x="5.5" y="5.5" width="5" height="5" fill="#ddd" stroke="#777" stroke-width="1"/><path d="M8 1.5v4M8 10.5v4M1.5 8h4M10.5 8h4" stroke="#777" stroke-width="1"/></svg>
<svg class="ic" style="left:1962px;top:1195px" width="14" height="14" viewBox="0 0 14 14"><path d="M3 13l10-10M7 13l6-6M11 13l2-2" stroke="#888" stroke-width="0.9"/></svg>
</body></html>
